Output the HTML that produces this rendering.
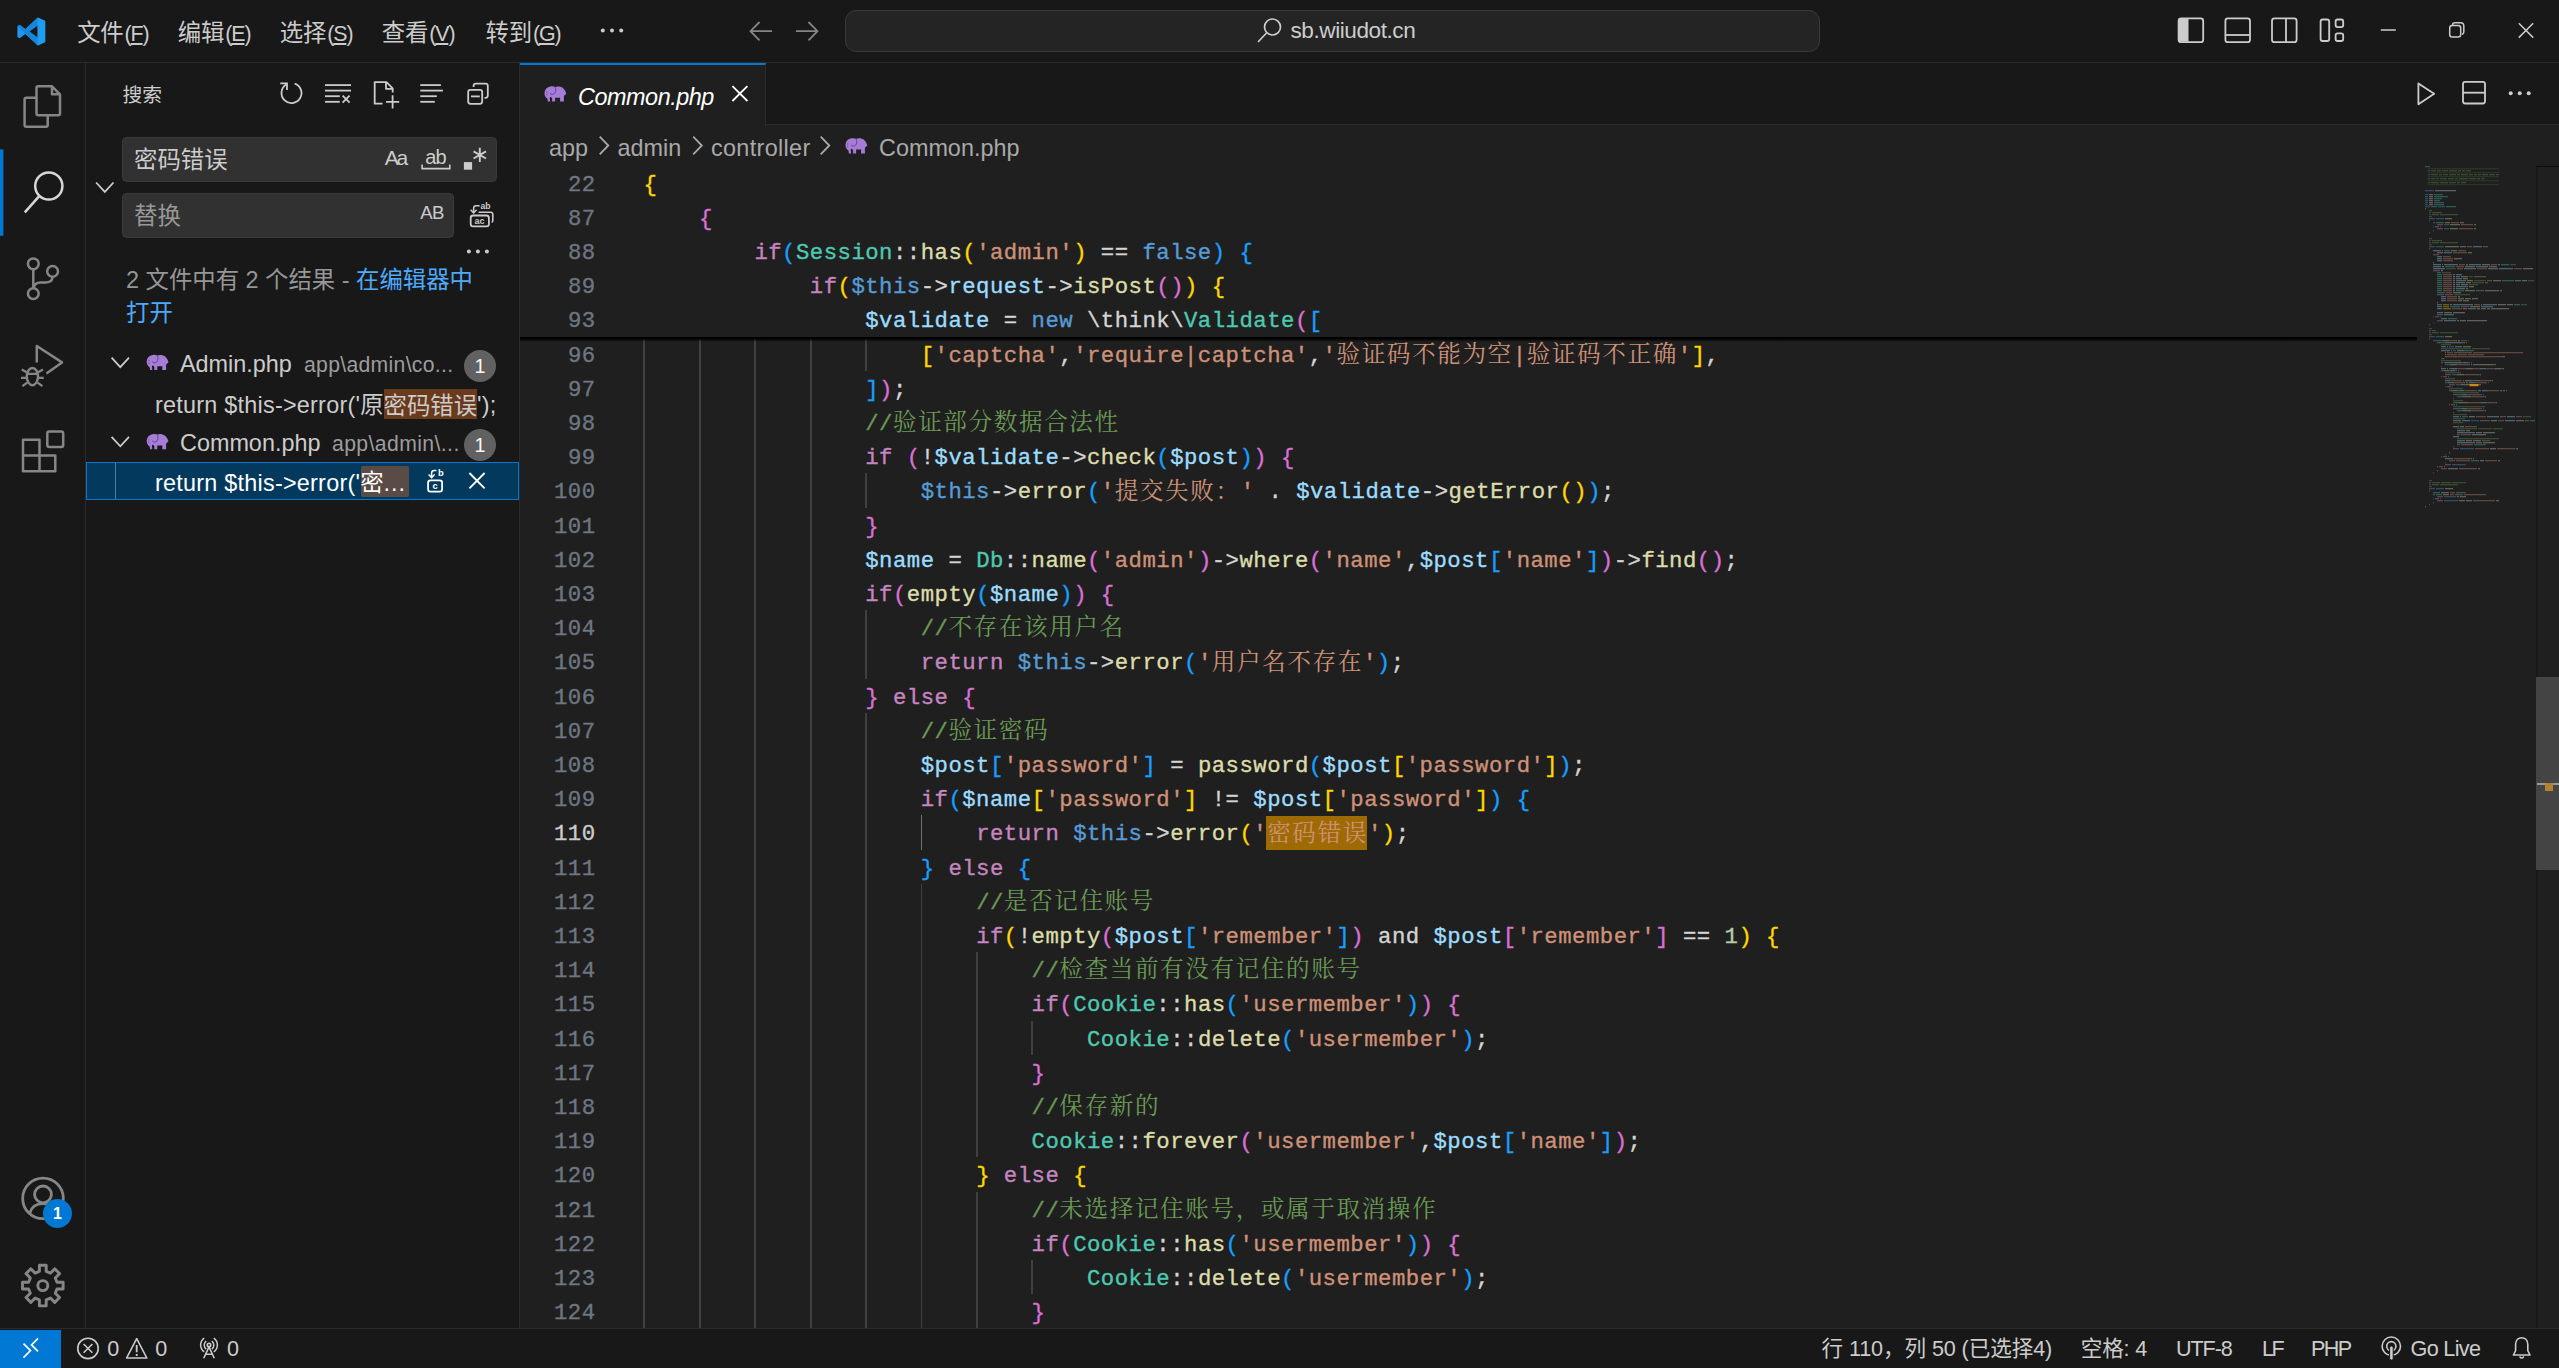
<!DOCTYPE html>
<html lang="zh-CN"><head><meta charset="utf-8"><title>Common.php - sb.wiiudot.cn - Visual Studio Code</title>
<style>
*{box-sizing:border-box;margin:0;padding:0}
html,body{width:2559px;height:1368px;overflow:hidden;background:#181818}
body{font-family:"Liberation Sans","Noto Sans CJK SC",sans-serif;color:#cccccc;-webkit-font-smoothing:antialiased}
#app{position:relative;width:2559px;height:1368px;overflow:hidden;background:#181818}
.abs{position:absolute}
.t{position:absolute;white-space:nowrap;line-height:34px;height:34px;font-size:23.4px;color:#cccccc}
.t u{text-decoration:underline;text-underline-offset:2px;text-decoration-thickness:1.5px}
i{font-style:normal}
/* regions */
#title{position:absolute;left:0;top:0;width:2559px;height:63px;background:#181818;border-bottom:1px solid #2b2b2b}
#act{position:absolute;left:0;top:63px;width:86px;height:1265.4px;background:#181818;border-right:1px solid #2b2b2b}
#side{position:absolute;left:86px;top:63px;width:434px;height:1265.4px;background:#181818;border-right:1px solid #2b2b2b}
#ed{position:absolute;left:520px;top:63px;width:2039px;height:1265.4px;background:#1f1f1f}
#tabs{position:absolute;left:520px;top:63px;width:2039px;height:62px;background:#181818;border-bottom:1px solid #2b2b2b}
#tab{position:absolute;left:520px;top:63px;width:246px;height:62.5px;background:#1f1f1f;border-right:1px solid #2b2b2b;border-top:2px solid #0078d4}
#status{position:absolute;left:0;top:1328.4px;width:2559px;height:39.6px;background:#181818;border-top:1px solid #2b2b2b}
#remote{position:absolute;left:0;top:1329.8px;width:61px;height:38.2px;background:#0078d4}
#cc{position:absolute;left:845px;top:10px;width:974.5px;height:42px;background:#242424;border:1px solid #3a3a3a;border-radius:11px}
.inp{position:absolute;background:#313131;border-radius:4.5px;border:1px solid #393939}
.badge{position:absolute;width:32px;height:32px;border-radius:16px;background:#616161;color:#f8f8f8;font-size:19.8px;line-height:32px;text-align:center}
.fm{background:#6a3a1c;display:inline-block;height:30.5px;line-height:30.5px;vertical-align:middle;position:relative;top:-2.6px}
.fm>b{font-weight:normal;position:relative;top:2.1px}
#sel{position:absolute;left:86px;top:461.8px;width:432.5px;height:38.6px;background:#04395e;border:1px solid #0078d4}
/* code */
.cl,.ln{position:absolute;white-space:pre;font-family:"Liberation Mono","Noto Serif CJK SC",monospace;font-size:22.300px;letter-spacing:0.478px;line-height:34.2px;height:34.2px}
.ln{left:520px;width:75.6px;text-align:right;color:#6e7681}
.ln.a{color:#cccccc}
.cl{color:#d4d4d4}
.cl,.ln{-webkit-text-stroke:0.35px currentColor}
.z{font-family:"Noto Serif CJK SC",serif;font-size:23.6px;letter-spacing:1.6px;font-weight:400;line-height:0;position:relative;top:0.4px;-webkit-text-stroke:0}
.k{color:#c586c0}.b{color:#569cd6}.c{color:#4ec9b0}.f{color:#dcdcaa}.v{color:#9cdcfe}
.s{color:#ce9178}.m{color:#6a9955}.n{color:#b5cea8}.w{color:#d4d4d4}
.y{color:#ffd700}.p{color:#da70d6}.u{color:#179fff}
#hl{position:absolute;left:1266.3px;top:816px;width:101px;height:33.6px;background:#9e6a03}
.g{position:absolute;width:1.8px;background:#404040}
.ga{background:#707070}
#shadow{position:absolute;left:520px;top:336.6px;width:1897px;height:5.6px;background:linear-gradient(#000000 0,#000000 25%,rgba(0,0,0,0) 100%)}
#slider{position:absolute;left:2536px;top:676.8px;width:23px;height:193.4px;background:#444444}
svg{position:absolute;left:0;top:0;overflow:visible}
</style></head>
<body><div id="app">
<div id="title"></div>
<div id="act"></div>
<div id="side"></div>
<div id="ed"></div>
<div id="tabs"></div>
<div id="tab"></div>
<div id="status"></div>
<div id="remote"></div>
<div id="cc"></div>
<div class="t " style="left:77.20px;top:15.50px;"><span style="letter-spacing:-0.3px">文件</span><span style="font-size:21.4px;letter-spacing:-1.1px;margin-left:1.2px">(<u>F</u>)</span></div>
<div class="t " style="left:177.80px;top:15.50px;"><span style="letter-spacing:-0.3px">编辑</span><span style="font-size:21.4px;letter-spacing:-1.1px;margin-left:1.2px">(<u>E</u>)</span></div>
<div class="t " style="left:279.80px;top:15.50px;"><span style="letter-spacing:-0.3px">选择</span><span style="font-size:21.4px;letter-spacing:-1.1px;margin-left:1.2px">(<u>S</u>)</span></div>
<div class="t " style="left:381.80px;top:15.50px;"><span style="letter-spacing:-0.3px">查看</span><span style="font-size:21.4px;letter-spacing:-1.1px;margin-left:1.2px">(<u>V</u>)</span></div>
<div class="t " style="left:485.60px;top:15.50px;"><span style="letter-spacing:-0.3px">转到</span><span style="font-size:21.4px;letter-spacing:-1.1px;margin-left:1.2px">(<u>G</u>)</span></div>
<div class="t " style="left:1290.50px;top:14.40px;font-size:22.6px;letter-spacing:-0.45px">sb.wiiudot.cn</div>
<div class="t " style="left:122.50px;top:78.00px;font-size:19.8px">搜索</div>
<div class="inp" style="left:122px;top:137px;width:375px;height:44.5px"></div>
<div class="inp" style="left:122px;top:193px;width:332px;height:44.5px"></div>
<div class="t " style="left:134.00px;top:143.00px;">密码错误</div>
<div class="t " style="left:134.00px;top:199.00px;color:#989898">替换</div>
<div class="t " style="left:384.80px;top:141.20px;font-size:21px;letter-spacing:-2.4px">Aa</div>
<div class="t " style="left:425.20px;top:139.50px;font-size:20px;letter-spacing:-0.8px">ab</div>
<div class="t " style="left:420.20px;top:196.40px;font-size:18.6px;letter-spacing:-0.6px">AB</div>
<div class="t " style="left:126.00px;top:263.00px;color:#969696">2 文件中有 2 个结果 - <span style="color:#4daafc">在编辑器中</span></div>
<div class="t " style="left:126.00px;top:296.00px;color:#4daafc">打开</div>
<div class="t " style="left:180.00px;top:346.80px;">Admin.php</div>
<div class="t " style="left:304.00px;top:347.80px;font-size:21.2px;color:#9d9d9d;letter-spacing:0.3px">app\admin\co...</div>
<div class="badge" style="left:464px;top:350px">1</div>
<div class="t " style="left:155.00px;top:387.80px;"><span style='letter-spacing:0.24px'>return $this-&gt;error('</span>原<span class='fm'><b>密码错误</b></span><span style='letter-spacing:0.24px'>');</span></div>
<div class="t " style="left:180.00px;top:425.70px;">Common.php</div>
<div class="t " style="left:332.00px;top:426.70px;font-size:21.2px;color:#9d9d9d;letter-spacing:0.4px">app\admin\...</div>
<div class="badge" style="left:464px;top:429px">1</div>
<div id="sel"></div>
<div class="abs" style="left:115px;top:463px;width:1px;height:36.6px;background:#4a7da6"></div>
<div class="abs" style="left:360.5px;top:466px;width:48.5px;height:31px;background:#5b4b47;border-radius:2px"></div>
<div class="t " style="left:155.00px;top:465.50px;color:#ffffff"><span style='letter-spacing:0.24px'>return $this-&gt;error('</span>密<span style='letter-spacing:1px'>...</span></div>
<div class="t " style="left:578.00px;top:80.00px;font-style:italic;color:#ffffff;font-size:23.4px;letter-spacing:-0.45px">Common.php</div>
<div class="t " style="left:549.00px;top:130.70px;color:#a9a9a9">app</div>
<div class="t " style="left:617.50px;top:130.70px;color:#a9a9a9">admin</div>
<div class="t " style="left:711.00px;top:130.70px;color:#a9a9a9;letter-spacing:0.33px">controller</div>
<div class="t " style="left:879.00px;top:130.70px;color:#a9a9a9">Common.php</div>
<div class="g" style="left:643.40px;top:336.6px;height:991.8px"></div>
<div class="g" style="left:698.84px;top:336.6px;height:991.8px"></div>
<div class="g" style="left:754.28px;top:336.6px;height:991.8px"></div>
<div class="g" style="left:809.72px;top:336.6px;height:991.8px"></div>
<div class="g" style="left:865.16px;top:336.6px;height:34.2px"></div>
<div class="g" style="left:865.16px;top:473.4px;height:34.2px"></div>
<div class="g" style="left:865.16px;top:610.2px;height:68.4px"></div>
<div class="g" style="left:865.16px;top:712.8px;height:615.6px"></div>
<div class="g ga" style="left:920.60px;top:815.4px;height:34.2px"></div>
<div class="g" style="left:920.60px;top:883.8px;height:444.6px"></div>
<div class="g" style="left:976.04px;top:952.2px;height:205.2px"></div>
<div class="g" style="left:976.04px;top:1191.6px;height:136.8px"></div>
<div class="g" style="left:1031.48px;top:1020.6px;height:34.2px"></div>
<div class="g" style="left:1031.48px;top:1260.0px;height:34.2px"></div>
<div id="hl"></div>
<div class="ln" style="top:167.5px">22</div>
<div class="cl" style="top:167.5px;left:643.50px"><span class="y">{</span></div>
<div class="ln" style="top:201.7px">87</div>
<div class="cl" style="top:201.7px;left:698.94px"><span class="p">{</span></div>
<div class="ln" style="top:235.9px">88</div>
<div class="cl" style="top:235.9px;left:754.38px"><span class="k">if</span><span class="u">(</span><span class="c">Session</span><span class="w">::</span><span class="f">has</span><span class="y">(</span><span class="s">'admin'</span><span class="y">)</span><span class="w"> == </span><span class="b">false</span><span class="u">)</span><span class="w"> </span><span class="u">{</span></div>
<div class="ln" style="top:270.1px">89</div>
<div class="cl" style="top:270.1px;left:809.82px"><span class="k">if</span><span class="y">(</span><span class="b">$this</span><span class="w">-&gt;</span><span class="v">request</span><span class="w">-&gt;</span><span class="f">isPost</span><span class="p">(</span><span class="p">)</span><span class="y">)</span><span class="w"> </span><span class="y">{</span></div>
<div class="ln" style="top:304.3px">93</div>
<div class="cl" style="top:304.3px;left:865.26px"><span class="v">$validate</span><span class="w"> = </span><span class="b">new</span><span class="w"> \think\</span><span class="c">Validate</span><span class="p">(</span><span class="u">[</span></div>
<div class="ln" style="top:338.5px">96</div>
<div class="cl" style="top:338.5px;left:920.70px"><span class="y">[</span><span class="s">'captcha'</span><span class="w">,</span><span class="s">'require|captcha'</span><span class="w">,</span><span class="s">'<i class="z">验证码不能为空</i>|<i class="z">验证码不正确</i>'</span><span class="y">]</span><span class="w">,</span></div>
<div class="ln" style="top:372.7px">97</div>
<div class="cl" style="top:372.7px;left:865.26px"><span class="u">]</span><span class="p">)</span><span class="w">;</span></div>
<div class="ln" style="top:406.9px">98</div>
<div class="cl" style="top:406.9px;left:865.26px"><span class="m">//<i class="z">验证部分数据合法性</i></span></div>
<div class="ln" style="top:441.1px">99</div>
<div class="cl" style="top:441.1px;left:865.26px"><span class="k">if</span><span class="w"> </span><span class="p">(</span><span class="w">!</span><span class="v">$validate</span><span class="w">-&gt;</span><span class="f">check</span><span class="u">(</span><span class="v">$post</span><span class="u">)</span><span class="p">)</span><span class="w"> </span><span class="p">{</span></div>
<div class="ln" style="top:475.3px">100</div>
<div class="cl" style="top:475.3px;left:920.70px"><span class="b">$this</span><span class="w">-&gt;</span><span class="f">error</span><span class="u">(</span><span class="s">'<i class="z">提交失败：</i>'</span><span class="w"> . </span><span class="v">$validate</span><span class="w">-&gt;</span><span class="f">getError</span><span class="y">(</span><span class="y">)</span><span class="u">)</span><span class="w">;</span></div>
<div class="ln" style="top:509.5px">101</div>
<div class="cl" style="top:509.5px;left:865.26px"><span class="p">}</span></div>
<div class="ln" style="top:543.7px">102</div>
<div class="cl" style="top:543.7px;left:865.26px"><span class="v">$name</span><span class="w"> = </span><span class="c">Db</span><span class="w">::</span><span class="f">name</span><span class="p">(</span><span class="s">'admin'</span><span class="p">)</span><span class="w">-&gt;</span><span class="f">where</span><span class="p">(</span><span class="s">'name'</span><span class="w">,</span><span class="v">$post</span><span class="u">[</span><span class="s">'name'</span><span class="u">]</span><span class="p">)</span><span class="w">-&gt;</span><span class="f">find</span><span class="p">(</span><span class="p">)</span><span class="w">;</span></div>
<div class="ln" style="top:577.9px">103</div>
<div class="cl" style="top:577.9px;left:865.26px"><span class="k">if</span><span class="p">(</span><span class="f">empty</span><span class="u">(</span><span class="v">$name</span><span class="u">)</span><span class="p">)</span><span class="w"> </span><span class="p">{</span></div>
<div class="ln" style="top:612.1px">104</div>
<div class="cl" style="top:612.1px;left:920.70px"><span class="m">//<i class="z">不存在该用户名</i></span></div>
<div class="ln" style="top:646.3px">105</div>
<div class="cl" style="top:646.3px;left:920.70px"><span class="k">return</span><span class="w"> </span><span class="b">$this</span><span class="w">-&gt;</span><span class="f">error</span><span class="u">(</span><span class="s">'<i class="z">用户名不存在</i>'</span><span class="u">)</span><span class="w">;</span></div>
<div class="ln" style="top:680.5px">106</div>
<div class="cl" style="top:680.5px;left:865.26px"><span class="p">}</span><span class="w"> </span><span class="k">else</span><span class="w"> </span><span class="p">{</span></div>
<div class="ln" style="top:714.7px">107</div>
<div class="cl" style="top:714.7px;left:920.70px"><span class="m">//<i class="z">验证密码</i></span></div>
<div class="ln" style="top:748.9px">108</div>
<div class="cl" style="top:748.9px;left:920.70px"><span class="v">$post</span><span class="u">[</span><span class="s">'password'</span><span class="u">]</span><span class="w"> = </span><span class="f">password</span><span class="u">(</span><span class="v">$post</span><span class="y">[</span><span class="s">'password'</span><span class="y">]</span><span class="u">)</span><span class="w">;</span></div>
<div class="ln" style="top:783.1px">109</div>
<div class="cl" style="top:783.1px;left:920.70px"><span class="k">if</span><span class="u">(</span><span class="v">$name</span><span class="y">[</span><span class="s">'password'</span><span class="y">]</span><span class="w"> != </span><span class="v">$post</span><span class="y">[</span><span class="s">'password'</span><span class="y">]</span><span class="u">)</span><span class="w"> </span><span class="u">{</span></div>
<div class="ln a" style="top:817.3px">110</div>
<div class="cl" style="top:817.3px;left:976.14px"><span class="k">return</span><span class="w"> </span><span class="b">$this</span><span class="w">-&gt;</span><span class="f">error</span><span class="y">(</span><span class="s">'</span><span class="s"><i class="z">密码错误</i></span><span class="s">'</span><span class="y">)</span><span class="w">;</span></div>
<div class="ln" style="top:851.5px">111</div>
<div class="cl" style="top:851.5px;left:920.70px"><span class="u">}</span><span class="w"> </span><span class="k">else</span><span class="w"> </span><span class="u">{</span></div>
<div class="ln" style="top:885.7px">112</div>
<div class="cl" style="top:885.7px;left:976.14px"><span class="m">//<i class="z">是否记住账号</i></span></div>
<div class="ln" style="top:919.9px">113</div>
<div class="cl" style="top:919.9px;left:976.14px"><span class="k">if</span><span class="y">(</span><span class="w">!</span><span class="f">empty</span><span class="p">(</span><span class="v">$post</span><span class="u">[</span><span class="s">'remember'</span><span class="u">]</span><span class="p">)</span><span class="w"> and </span><span class="v">$post</span><span class="p">[</span><span class="s">'remember'</span><span class="p">]</span><span class="w"> == </span><span class="n">1</span><span class="y">)</span><span class="w"> </span><span class="y">{</span></div>
<div class="ln" style="top:954.1px">114</div>
<div class="cl" style="top:954.1px;left:1031.58px"><span class="m">//<i class="z">检查当前有没有记住的账号</i></span></div>
<div class="ln" style="top:988.3px">115</div>
<div class="cl" style="top:988.3px;left:1031.58px"><span class="k">if</span><span class="p">(</span><span class="c">Cookie</span><span class="w">::</span><span class="f">has</span><span class="u">(</span><span class="s">'usermember'</span><span class="u">)</span><span class="p">)</span><span class="w"> </span><span class="p">{</span></div>
<div class="ln" style="top:1022.5px">116</div>
<div class="cl" style="top:1022.5px;left:1087.02px"><span class="c">Cookie</span><span class="w">::</span><span class="f">delete</span><span class="u">(</span><span class="s">'usermember'</span><span class="u">)</span><span class="w">;</span></div>
<div class="ln" style="top:1056.7px">117</div>
<div class="cl" style="top:1056.7px;left:1031.58px"><span class="p">}</span></div>
<div class="ln" style="top:1090.9px">118</div>
<div class="cl" style="top:1090.9px;left:1031.58px"><span class="m">//<i class="z">保存新的</i></span></div>
<div class="ln" style="top:1125.1px">119</div>
<div class="cl" style="top:1125.1px;left:1031.58px"><span class="c">Cookie</span><span class="w">::</span><span class="f">forever</span><span class="p">(</span><span class="s">'usermember'</span><span class="w">,</span><span class="v">$post</span><span class="u">[</span><span class="s">'name'</span><span class="u">]</span><span class="p">)</span><span class="w">;</span></div>
<div class="ln" style="top:1159.3px">120</div>
<div class="cl" style="top:1159.3px;left:976.14px"><span class="y">}</span><span class="w"> </span><span class="k">else</span><span class="w"> </span><span class="y">{</span></div>
<div class="ln" style="top:1193.5px">121</div>
<div class="cl" style="top:1193.5px;left:1031.58px"><span class="m">//<i class="z">未选择记住账号，或属于取消操作</i></span></div>
<div class="ln" style="top:1227.7px">122</div>
<div class="cl" style="top:1227.7px;left:1031.58px"><span class="k">if</span><span class="p">(</span><span class="c">Cookie</span><span class="w">::</span><span class="f">has</span><span class="u">(</span><span class="s">'usermember'</span><span class="u">)</span><span class="p">)</span><span class="w"> </span><span class="p">{</span></div>
<div class="ln" style="top:1261.9px">123</div>
<div class="cl" style="top:1261.9px;left:1087.02px"><span class="c">Cookie</span><span class="w">::</span><span class="f">delete</span><span class="u">(</span><span class="s">'usermember'</span><span class="u">)</span><span class="w">;</span></div>
<div class="ln" style="top:1296.1px">124</div>
<div class="cl" style="top:1296.1px;left:1031.58px"><span class="p">}</span></div>
<div id="shadow"></div>
<div class="abs" style="left:2536px;top:166px;width:2px;height:1162.4px;background:#191919"></div>
<div class="abs" style="left:2536px;top:166px;width:23px;height:1.2px;background:#0c0c0c"></div>
<div id="slider"></div>
<div class="abs" style="left:2537px;top:783.2px;width:22px;height:2px;background:#989898"></div>
<div class="abs" style="left:2545px;top:782.6px;width:8px;height:8.6px;background:#b5832f"></div>
<div class="t " style="left:107.30px;top:1331.50px;font-size:21.6px">0</div>
<div class="t " style="left:155.30px;top:1331.50px;font-size:21.6px">0</div>
<div class="t " style="left:227.10px;top:1331.50px;font-size:21.6px">0</div>
<div class="t " style="left:1821.50px;top:1332.30px;font-size:21.6px;letter-spacing:-0.1px">行 110，列 50 (已选择4)</div>
<div class="t " style="left:2080.80px;top:1332.30px;font-size:21.6px;letter-spacing:-0.2px">空格: 4</div>
<div class="t " style="left:2176.00px;top:1332.30px;font-size:21.6px;letter-spacing:-1.1px">UTF-8</div>
<div class="t " style="left:2262.00px;top:1332.30px;font-size:21.6px;letter-spacing:-2.6px">LF</div>
<div class="t " style="left:2311.00px;top:1332.30px;font-size:21.6px;letter-spacing:-1.6px">PHP</div>
<div class="t " style="left:2410.50px;top:1332.30px;font-size:21.6px;letter-spacing:-0.65px">Go Live</div>
<svg width="2559" height="1368" viewBox="0 0 2559 1368">
<rect x="2425.0" y="166.0" width="5.0" height="1.3" fill="#569cd6" opacity="0.36"/>
<rect x="2428.0" y="168.0" width="71.0" height="1.3" fill="#3f5a33" opacity="0.36"/>
<rect x="2428.0" y="170.0" width="2.0" height="1.3" fill="#6a9955" opacity="0.36"/>
<rect x="2431.0" y="170.0" width="5.0" height="1.3" fill="#6a9955" opacity="0.36"/>
<rect x="2437.0" y="170.0" width="4.0" height="1.3" fill="#6a9955" opacity="0.36"/>
<rect x="2442.0" y="170.0" width="6.0" height="1.3" fill="#6a9955" opacity="0.36"/>
<rect x="2449.0" y="170.0" width="8.0" height="1.3" fill="#6a9955" opacity="0.36"/>
<rect x="2458.0" y="170.0" width="3.0" height="1.3" fill="#6a9955" opacity="0.36"/>
<rect x="2462.0" y="170.0" width="3.0" height="1.3" fill="#6a9955" opacity="0.36"/>
<rect x="2466.0" y="170.0" width="5.0" height="1.3" fill="#6a9955" opacity="0.36"/>
<rect x="2428.0" y="172.0" width="71.0" height="1.3" fill="#3f5a33" opacity="0.36"/>
<rect x="2428.0" y="174.0" width="2.0" height="1.3" fill="#6a9955" opacity="0.36"/>
<rect x="2431.0" y="174.0" width="7.0" height="1.3" fill="#6a9955" opacity="0.36"/>
<rect x="2439.0" y="174.0" width="3.0" height="1.3" fill="#6a9955" opacity="0.36"/>
<rect x="2443.0" y="174.0" width="5.0" height="1.3" fill="#6a9955" opacity="0.36"/>
<rect x="2449.0" y="174.0" width="7.0" height="1.3" fill="#6a9955" opacity="0.36"/>
<rect x="2457.0" y="174.0" width="3.0" height="1.3" fill="#6a9955" opacity="0.36"/>
<rect x="2461.0" y="174.0" width="7.0" height="1.3" fill="#6a9955" opacity="0.36"/>
<rect x="2469.0" y="174.0" width="4.0" height="1.3" fill="#6a9955" opacity="0.36"/>
<rect x="2474.0" y="174.0" width="3.0" height="1.3" fill="#6a9955" opacity="0.36"/>
<rect x="2478.0" y="174.0" width="3.0" height="1.3" fill="#6a9955" opacity="0.36"/>
<rect x="2482.0" y="174.0" width="6.0" height="1.3" fill="#6a9955" opacity="0.36"/>
<rect x="2489.0" y="174.0" width="6.0" height="1.3" fill="#6a9955" opacity="0.36"/>
<rect x="2496.0" y="174.0" width="3.0" height="1.3" fill="#6a9955" opacity="0.36"/>
<rect x="2428.0" y="176.0" width="71.0" height="1.3" fill="#3f5a33" opacity="0.36"/>
<rect x="2428.0" y="178.0" width="2.0" height="1.3" fill="#6a9955" opacity="0.36"/>
<rect x="2431.0" y="178.0" width="4.0" height="1.3" fill="#6a9955" opacity="0.36"/>
<rect x="2436.0" y="178.0" width="3.0" height="1.3" fill="#6a9955" opacity="0.36"/>
<rect x="2440.0" y="178.0" width="7.0" height="1.3" fill="#6a9955" opacity="0.36"/>
<rect x="2448.0" y="178.0" width="6.0" height="1.3" fill="#6a9955" opacity="0.36"/>
<rect x="2455.0" y="178.0" width="3.0" height="1.3" fill="#6a9955" opacity="0.36"/>
<rect x="2459.0" y="178.0" width="9.0" height="1.3" fill="#6a9955" opacity="0.36"/>
<rect x="2469.0" y="178.0" width="7.0" height="1.3" fill="#6a9955" opacity="0.36"/>
<rect x="2477.0" y="178.0" width="3.0" height="1.3" fill="#6a9955" opacity="0.36"/>
<rect x="2481.0" y="178.0" width="4.0" height="1.3" fill="#6a9955" opacity="0.36"/>
<rect x="2428.0" y="180.0" width="71.0" height="1.3" fill="#3f5a33" opacity="0.36"/>
<rect x="2428.0" y="182.0" width="2.0" height="1.3" fill="#6a9955" opacity="0.36"/>
<rect x="2431.0" y="182.0" width="8.0" height="1.3" fill="#6a9955" opacity="0.36"/>
<rect x="2440.0" y="182.0" width="8.0" height="1.3" fill="#6a9955" opacity="0.36"/>
<rect x="2449.0" y="182.0" width="7.0" height="1.3" fill="#6a9955" opacity="0.36"/>
<rect x="2457.0" y="182.0" width="3.0" height="1.3" fill="#6a9955" opacity="0.36"/>
<rect x="2461.0" y="182.0" width="5.0" height="1.3" fill="#6a9955" opacity="0.36"/>
<rect x="2428.0" y="184.0" width="71.0" height="1.3" fill="#3f5a33" opacity="0.36"/>
<rect x="2425.0" y="190.0" width="9.0" height="1.3" fill="#569cd6" opacity="0.36"/>
<rect x="2435.0" y="190.0" width="21.0" height="1.3" fill="#d4d4d4" opacity="0.36"/>
<rect x="2425.0" y="194.0" width="3.0" height="1.3" fill="#569cd6" opacity="0.36"/>
<rect x="2429.0" y="194.0" width="4.0" height="1.3" fill="#d4d4d4" opacity="0.36"/>
<rect x="2434.0" y="194.0" width="9.0" height="1.3" fill="#4ec9b0" opacity="0.36"/>
<rect x="2425.0" y="196.0" width="3.0" height="1.3" fill="#569cd6" opacity="0.36"/>
<rect x="2429.0" y="196.0" width="4.0" height="1.3" fill="#d4d4d4" opacity="0.36"/>
<rect x="2434.0" y="196.0" width="14.0" height="1.3" fill="#4ec9b0" opacity="0.36"/>
<rect x="2425.0" y="198.0" width="3.0" height="1.3" fill="#569cd6" opacity="0.36"/>
<rect x="2429.0" y="198.0" width="4.0" height="1.3" fill="#d4d4d4" opacity="0.36"/>
<rect x="2434.0" y="198.0" width="8.0" height="1.3" fill="#4ec9b0" opacity="0.36"/>
<rect x="2425.0" y="200.0" width="3.0" height="1.3" fill="#569cd6" opacity="0.36"/>
<rect x="2429.0" y="200.0" width="4.0" height="1.3" fill="#d4d4d4" opacity="0.36"/>
<rect x="2434.0" y="200.0" width="6.0" height="1.3" fill="#4ec9b0" opacity="0.36"/>
<rect x="2425.0" y="202.0" width="3.0" height="1.3" fill="#569cd6" opacity="0.36"/>
<rect x="2429.0" y="202.0" width="4.0" height="1.3" fill="#d4d4d4" opacity="0.36"/>
<rect x="2434.0" y="202.0" width="10.0" height="1.3" fill="#4ec9b0" opacity="0.36"/>
<rect x="2425.0" y="204.0" width="3.0" height="1.3" fill="#569cd6" opacity="0.36"/>
<rect x="2429.0" y="204.0" width="4.0" height="1.3" fill="#d4d4d4" opacity="0.36"/>
<rect x="2434.0" y="204.0" width="10.0" height="1.3" fill="#4ec9b0" opacity="0.36"/>
<rect x="2425.0" y="206.0" width="5.0" height="1.3" fill="#569cd6" opacity="0.36"/>
<rect x="2431.0" y="206.0" width="6.0" height="1.3" fill="#4ec9b0" opacity="0.36"/>
<rect x="2438.0" y="206.0" width="7.0" height="1.3" fill="#569cd6" opacity="0.36"/>
<rect x="2446.0" y="206.0" width="10.0" height="1.3" fill="#4ec9b0" opacity="0.36"/>
<rect x="2425.0" y="208.0" width="1.0" height="1.3" fill="#ffd700" opacity="0.36"/>
<rect x="2429.0" y="210.0" width="3.0" height="1.3" fill="#6a9955" opacity="0.36"/>
<rect x="2429.0" y="212.0" width="2.0" height="1.3" fill="#6a9955" opacity="0.36"/>
<rect x="2432.0" y="212.0" width="10.0" height="1.3" fill="#6a9955" opacity="0.36"/>
<rect x="2429.0" y="214.0" width="2.0" height="1.3" fill="#6a9955" opacity="0.36"/>
<rect x="2432.0" y="214.0" width="7.0" height="1.3" fill="#6a9955" opacity="0.36"/>
<rect x="2440.0" y="214.0" width="18.0" height="1.3" fill="#6a9955" opacity="0.36"/>
<rect x="2429.0" y="216.0" width="3.0" height="1.3" fill="#6a9955" opacity="0.36"/>
<rect x="2429.0" y="218.0" width="6.0" height="1.3" fill="#569cd6" opacity="0.36"/>
<rect x="2436.0" y="218.0" width="8.0" height="1.3" fill="#569cd6" opacity="0.36"/>
<rect x="2445.0" y="218.0" width="7.0" height="1.3" fill="#dcdcaa" opacity="0.36"/>
<rect x="2429.0" y="220.0" width="1.0" height="1.3" fill="#da70d6" opacity="0.36"/>
<rect x="2433.0" y="222.0" width="2.0" height="1.3" fill="#c586c0" opacity="0.36"/>
<rect x="2436.0" y="222.0" width="8.0" height="1.3" fill="#4ec9b0" opacity="0.36"/>
<rect x="2445.0" y="222.0" width="5.0" height="1.3" fill="#dcdcaa" opacity="0.36"/>
<rect x="2451.0" y="222.0" width="8.0" height="1.3" fill="#ce9178" opacity="0.36"/>
<rect x="2460.0" y="222.0" width="4.0" height="1.3" fill="#d4d4d4" opacity="0.36"/>
<rect x="2437.0" y="224.0" width="6.0" height="1.3" fill="#c586c0" opacity="0.36"/>
<rect x="2444.0" y="224.0" width="5.0" height="1.3" fill="#569cd6" opacity="0.36"/>
<rect x="2450.0" y="224.0" width="10.0" height="1.3" fill="#dcdcaa" opacity="0.36"/>
<rect x="2461.0" y="224.0" width="12.0" height="1.3" fill="#ce9178" opacity="0.36"/>
<rect x="2474.0" y="224.0" width="2.0" height="1.3" fill="#d4d4d4" opacity="0.36"/>
<rect x="2433.0" y="226.0" width="1.0" height="1.3" fill="#179fff" opacity="0.36"/>
<rect x="2435.0" y="226.0" width="4.0" height="1.3" fill="#c586c0" opacity="0.36"/>
<rect x="2440.0" y="226.0" width="1.0" height="1.3" fill="#179fff" opacity="0.36"/>
<rect x="2437.0" y="228.0" width="6.0" height="1.3" fill="#c586c0" opacity="0.36"/>
<rect x="2444.0" y="228.0" width="5.0" height="1.3" fill="#569cd6" opacity="0.36"/>
<rect x="2450.0" y="228.0" width="8.0" height="1.3" fill="#dcdcaa" opacity="0.36"/>
<rect x="2459.0" y="228.0" width="14.0" height="1.3" fill="#ce9178" opacity="0.36"/>
<rect x="2474.0" y="228.0" width="2.0" height="1.3" fill="#d4d4d4" opacity="0.36"/>
<rect x="2433.0" y="230.0" width="1.0" height="1.3" fill="#179fff" opacity="0.36"/>
<rect x="2429.0" y="232.0" width="1.0" height="1.3" fill="#da70d6" opacity="0.36"/>
<rect x="2429.0" y="238.0" width="3.0" height="1.3" fill="#6a9955" opacity="0.36"/>
<rect x="2429.0" y="240.0" width="2.0" height="1.3" fill="#6a9955" opacity="0.36"/>
<rect x="2432.0" y="240.0" width="10.0" height="1.3" fill="#6a9955" opacity="0.36"/>
<rect x="2429.0" y="242.0" width="2.0" height="1.3" fill="#6a9955" opacity="0.36"/>
<rect x="2432.0" y="242.0" width="7.0" height="1.3" fill="#6a9955" opacity="0.36"/>
<rect x="2440.0" y="242.0" width="18.0" height="1.3" fill="#6a9955" opacity="0.36"/>
<rect x="2429.0" y="244.0" width="3.0" height="1.3" fill="#6a9955" opacity="0.36"/>
<rect x="2429.0" y="246.0" width="6.0" height="1.3" fill="#569cd6" opacity="0.36"/>
<rect x="2436.0" y="246.0" width="8.0" height="1.3" fill="#569cd6" opacity="0.36"/>
<rect x="2445.0" y="246.0" width="14.0" height="1.3" fill="#dcdcaa" opacity="0.36"/>
<rect x="2460.0" y="246.0" width="6.0" height="1.3" fill="#9cdcfe" opacity="0.36"/>
<rect x="2467.0" y="246.0" width="5.0" height="1.3" fill="#ce9178" opacity="0.36"/>
<rect x="2473.0" y="246.0" width="9.0" height="1.3" fill="#9cdcfe" opacity="0.36"/>
<rect x="2483.0" y="246.0" width="5.0" height="1.3" fill="#ce9178" opacity="0.36"/>
<rect x="2429.0" y="248.0" width="1.0" height="1.3" fill="#da70d6" opacity="0.36"/>
<rect x="2433.0" y="250.0" width="8.0" height="1.3" fill="#9cdcfe" opacity="0.36"/>
<rect x="2442.0" y="250.0" width="1.0" height="1.3" fill="#d4d4d4" opacity="0.36"/>
<rect x="2444.0" y="250.0" width="6.0" height="1.3" fill="#4ec9b0" opacity="0.36"/>
<rect x="2451.0" y="250.0" width="6.0" height="1.3" fill="#dcdcaa" opacity="0.36"/>
<rect x="2458.0" y="250.0" width="8.0" height="1.3" fill="#ce9178" opacity="0.36"/>
<rect x="2437.0" y="252.0" width="6.0" height="1.3" fill="#dcdcaa" opacity="0.36"/>
<rect x="2444.0" y="252.0" width="8.0" height="1.3" fill="#9cdcfe" opacity="0.36"/>
<rect x="2453.0" y="252.0" width="14.0" height="1.3" fill="#ce9178" opacity="0.36"/>
<rect x="2468.0" y="252.0" width="4.0" height="1.3" fill="#d4d4d4" opacity="0.36"/>
<rect x="2433.0" y="254.0" width="6.0" height="1.3" fill="#c586c0" opacity="0.36"/>
<rect x="2437.0" y="256.0" width="5.0" height="1.3" fill="#9cdcfe" opacity="0.36"/>
<rect x="2443.0" y="256.0" width="8.0" height="1.3" fill="#ce9178" opacity="0.36"/>
<rect x="2437.0" y="258.0" width="5.0" height="1.3" fill="#9cdcfe" opacity="0.36"/>
<rect x="2443.0" y="258.0" width="10.0" height="1.3" fill="#ce9178" opacity="0.36"/>
<rect x="2454.0" y="258.0" width="8.0" height="1.3" fill="#dcdcaa" opacity="0.36"/>
<rect x="2437.0" y="260.0" width="5.0" height="1.3" fill="#9cdcfe" opacity="0.36"/>
<rect x="2443.0" y="260.0" width="10.0" height="1.3" fill="#ce9178" opacity="0.36"/>
<rect x="2433.0" y="262.0" width="1.0" height="1.3" fill="#d4d4d4" opacity="0.36"/>
<rect x="2433.0" y="264.0" width="8.0" height="1.3" fill="#9cdcfe" opacity="0.36"/>
<rect x="2442.0" y="264.0" width="1.0" height="1.3" fill="#d4d4d4" opacity="0.36"/>
<rect x="2444.0" y="264.0" width="14.0" height="1.3" fill="#9cdcfe" opacity="0.36"/>
<rect x="2459.0" y="264.0" width="6.0" height="1.3" fill="#ce9178" opacity="0.36"/>
<rect x="2466.0" y="264.0" width="2.0" height="1.3" fill="#d4d4d4" opacity="0.36"/>
<rect x="2469.0" y="264.0" width="12.0" height="1.3" fill="#9cdcfe" opacity="0.36"/>
<rect x="2482.0" y="264.0" width="8.0" height="1.3" fill="#dcdcaa" opacity="0.36"/>
<rect x="2491.0" y="264.0" width="6.0" height="1.3" fill="#ce9178" opacity="0.36"/>
<rect x="2498.0" y="264.0" width="2.0" height="1.3" fill="#d4d4d4" opacity="0.36"/>
<rect x="2501.0" y="264.0" width="8.0" height="1.3" fill="#4ec9b0" opacity="0.36"/>
<rect x="2510.0" y="264.0" width="6.0" height="1.3" fill="#6a9955" opacity="0.36"/>
<rect x="2433.0" y="266.0" width="8.0" height="1.3" fill="#9cdcfe" opacity="0.36"/>
<rect x="2442.0" y="266.0" width="2.0" height="1.3" fill="#d4d4d4" opacity="0.36"/>
<rect x="2445.0" y="266.0" width="10.0" height="1.3" fill="#4ec9b0" opacity="0.36"/>
<rect x="2456.0" y="266.0" width="8.0" height="1.3" fill="#ce9178" opacity="0.36"/>
<rect x="2465.0" y="266.0" width="10.0" height="1.3" fill="#dcdcaa" opacity="0.36"/>
<rect x="2476.0" y="266.0" width="12.0" height="1.3" fill="#9cdcfe" opacity="0.36"/>
<rect x="2489.0" y="266.0" width="8.0" height="1.3" fill="#d4d4d4" opacity="0.36"/>
<rect x="2433.0" y="268.0" width="12.0" height="1.3" fill="#9cdcfe" opacity="0.36"/>
<rect x="2446.0" y="268.0" width="10.0" height="1.3" fill="#6a9955" opacity="0.36"/>
<rect x="2457.0" y="268.0" width="6.0" height="1.3" fill="#ce9178" opacity="0.36"/>
<rect x="2464.0" y="268.0" width="12.0" height="1.3" fill="#9cdcfe" opacity="0.36"/>
<rect x="2477.0" y="268.0" width="10.0" height="1.3" fill="#ce9178" opacity="0.36"/>
<rect x="2488.0" y="268.0" width="10.0" height="1.3" fill="#d4d4d4" opacity="0.36"/>
<rect x="2499.0" y="268.0" width="14.0" height="1.3" fill="#9cdcfe" opacity="0.36"/>
<rect x="2514.0" y="268.0" width="8.0" height="1.3" fill="#ce9178" opacity="0.36"/>
<rect x="2523.0" y="268.0" width="10.0" height="1.3" fill="#d4d4d4" opacity="0.36"/>
<rect x="2433.0" y="270.0" width="7.0" height="1.3" fill="#c586c0" opacity="0.36"/>
<rect x="2441.0" y="270.0" width="2.0" height="1.3" fill="#d4d4d4" opacity="0.36"/>
<rect x="2437.0" y="272.0" width="4.0" height="1.3" fill="#4ec9b0" opacity="0.36"/>
<rect x="2442.0" y="272.0" width="9.0" height="1.3" fill="#6a9955" opacity="0.36"/>
<rect x="2437.0" y="274.0" width="5.0" height="1.3" fill="#4ec9b0" opacity="0.36"/>
<rect x="2443.0" y="274.0" width="9.0" height="1.3" fill="#ce9178" opacity="0.36"/>
<rect x="2453.0" y="274.0" width="2.0" height="1.3" fill="#d4d4d4" opacity="0.36"/>
<rect x="2456.0" y="274.0" width="6.0" height="1.3" fill="#9cdcfe" opacity="0.36"/>
<rect x="2437.0" y="276.0" width="5.0" height="1.3" fill="#4ec9b0" opacity="0.36"/>
<rect x="2443.0" y="276.0" width="9.0" height="1.3" fill="#ce9178" opacity="0.36"/>
<rect x="2453.0" y="276.0" width="2.0" height="1.3" fill="#d4d4d4" opacity="0.36"/>
<rect x="2456.0" y="276.0" width="4.0" height="1.3" fill="#9cdcfe" opacity="0.36"/>
<rect x="2461.0" y="276.0" width="7.0" height="1.3" fill="#dcdcaa" opacity="0.36"/>
<rect x="2469.0" y="276.0" width="4.0" height="1.3" fill="#6a9955" opacity="0.36"/>
<rect x="2474.0" y="276.0" width="12.0" height="1.3" fill="#ce9178" opacity="0.36"/>
<rect x="2437.0" y="278.0" width="5.0" height="1.3" fill="#4ec9b0" opacity="0.36"/>
<rect x="2443.0" y="278.0" width="9.0" height="1.3" fill="#ce9178" opacity="0.36"/>
<rect x="2453.0" y="278.0" width="2.0" height="1.3" fill="#d4d4d4" opacity="0.36"/>
<rect x="2456.0" y="278.0" width="6.0" height="1.3" fill="#9cdcfe" opacity="0.36"/>
<rect x="2463.0" y="278.0" width="5.0" height="1.3" fill="#dcdcaa" opacity="0.36"/>
<rect x="2437.0" y="280.0" width="5.0" height="1.3" fill="#4ec9b0" opacity="0.36"/>
<rect x="2443.0" y="280.0" width="9.0" height="1.3" fill="#ce9178" opacity="0.36"/>
<rect x="2453.0" y="280.0" width="2.0" height="1.3" fill="#d4d4d4" opacity="0.36"/>
<rect x="2456.0" y="280.0" width="10.0" height="1.3" fill="#9cdcfe" opacity="0.36"/>
<rect x="2467.0" y="280.0" width="6.0" height="1.3" fill="#dcdcaa" opacity="0.36"/>
<rect x="2474.0" y="280.0" width="12.0" height="1.3" fill="#6a9955" opacity="0.36"/>
<rect x="2487.0" y="280.0" width="5.0" height="1.3" fill="#ce9178" opacity="0.36"/>
<rect x="2493.0" y="280.0" width="8.0" height="1.3" fill="#d4d4d4" opacity="0.36"/>
<rect x="2502.0" y="280.0" width="12.0" height="1.3" fill="#4ec9b0" opacity="0.36"/>
<rect x="2515.0" y="280.0" width="6.0" height="1.3" fill="#9cdcfe" opacity="0.36"/>
<rect x="2522.0" y="280.0" width="5.0" height="1.3" fill="#dcdcaa" opacity="0.36"/>
<rect x="2528.0" y="280.0" width="6.0" height="1.3" fill="#6a9955" opacity="0.36"/>
<rect x="2437.0" y="282.0" width="5.0" height="1.3" fill="#4ec9b0" opacity="0.36"/>
<rect x="2443.0" y="282.0" width="9.0" height="1.3" fill="#ce9178" opacity="0.36"/>
<rect x="2453.0" y="282.0" width="2.0" height="1.3" fill="#d4d4d4" opacity="0.36"/>
<rect x="2456.0" y="282.0" width="9.0" height="1.3" fill="#9cdcfe" opacity="0.36"/>
<rect x="2466.0" y="282.0" width="5.0" height="1.3" fill="#dcdcaa" opacity="0.36"/>
<rect x="2472.0" y="282.0" width="12.0" height="1.3" fill="#6a9955" opacity="0.36"/>
<rect x="2485.0" y="282.0" width="3.0" height="1.3" fill="#ce9178" opacity="0.36"/>
<rect x="2437.0" y="284.0" width="5.0" height="1.3" fill="#4ec9b0" opacity="0.36"/>
<rect x="2443.0" y="284.0" width="9.0" height="1.3" fill="#ce9178" opacity="0.36"/>
<rect x="2453.0" y="284.0" width="2.0" height="1.3" fill="#d4d4d4" opacity="0.36"/>
<rect x="2456.0" y="284.0" width="4.0" height="1.3" fill="#9cdcfe" opacity="0.36"/>
<rect x="2461.0" y="284.0" width="7.0" height="1.3" fill="#dcdcaa" opacity="0.36"/>
<rect x="2469.0" y="284.0" width="9.0" height="1.3" fill="#6a9955" opacity="0.36"/>
<rect x="2437.0" y="286.0" width="5.0" height="1.3" fill="#4ec9b0" opacity="0.36"/>
<rect x="2443.0" y="286.0" width="9.0" height="1.3" fill="#ce9178" opacity="0.36"/>
<rect x="2453.0" y="286.0" width="2.0" height="1.3" fill="#d4d4d4" opacity="0.36"/>
<rect x="2456.0" y="286.0" width="12.0" height="1.3" fill="#9cdcfe" opacity="0.36"/>
<rect x="2469.0" y="286.0" width="5.0" height="1.3" fill="#dcdcaa" opacity="0.36"/>
<rect x="2437.0" y="288.0" width="5.0" height="1.3" fill="#4ec9b0" opacity="0.36"/>
<rect x="2443.0" y="288.0" width="9.0" height="1.3" fill="#ce9178" opacity="0.36"/>
<rect x="2453.0" y="288.0" width="2.0" height="1.3" fill="#d4d4d4" opacity="0.36"/>
<rect x="2456.0" y="288.0" width="9.0" height="1.3" fill="#9cdcfe" opacity="0.36"/>
<rect x="2466.0" y="288.0" width="2.0" height="1.3" fill="#dcdcaa" opacity="0.36"/>
<rect x="2437.0" y="290.0" width="5.0" height="1.3" fill="#4ec9b0" opacity="0.36"/>
<rect x="2443.0" y="290.0" width="9.0" height="1.3" fill="#ce9178" opacity="0.36"/>
<rect x="2453.0" y="290.0" width="2.0" height="1.3" fill="#d4d4d4" opacity="0.36"/>
<rect x="2456.0" y="290.0" width="8.0" height="1.3" fill="#4ec9b0" opacity="0.36"/>
<rect x="2465.0" y="290.0" width="10.0" height="1.3" fill="#d4d4d4" opacity="0.36"/>
<rect x="2476.0" y="290.0" width="8.0" height="1.3" fill="#4ec9b0" opacity="0.36"/>
<rect x="2485.0" y="290.0" width="14.0" height="1.3" fill="#d4d4d4" opacity="0.36"/>
<rect x="2500.0" y="290.0" width="2.0" height="1.3" fill="#d4d4d4" opacity="0.36"/>
<rect x="2437.0" y="292.0" width="8.0" height="1.3" fill="#4ec9b0" opacity="0.36"/>
<rect x="2446.0" y="292.0" width="6.0" height="1.3" fill="#ce9178" opacity="0.36"/>
<rect x="2453.0" y="292.0" width="8.0" height="1.3" fill="#d4d4d4" opacity="0.36"/>
<rect x="2437.0" y="294.0" width="7.0" height="1.3" fill="#c586c0" opacity="0.36"/>
<rect x="2445.0" y="294.0" width="8.0" height="1.3" fill="#ce9178" opacity="0.36"/>
<rect x="2454.0" y="294.0" width="16.0" height="1.3" fill="#6a9955" opacity="0.36"/>
<rect x="2441.0" y="296.0" width="5.0" height="1.3" fill="#9cdcfe" opacity="0.36"/>
<rect x="2447.0" y="296.0" width="10.0" height="1.3" fill="#ce9178" opacity="0.36"/>
<rect x="2458.0" y="296.0" width="2.0" height="1.3" fill="#d4d4d4" opacity="0.36"/>
<rect x="2441.0" y="298.0" width="5.0" height="1.3" fill="#9cdcfe" opacity="0.36"/>
<rect x="2447.0" y="298.0" width="10.0" height="1.3" fill="#ce9178" opacity="0.36"/>
<rect x="2458.0" y="298.0" width="6.0" height="1.3" fill="#d4d4d4" opacity="0.36"/>
<rect x="2465.0" y="298.0" width="6.0" height="1.3" fill="#dcdcaa" opacity="0.36"/>
<rect x="2472.0" y="298.0" width="6.0" height="1.3" fill="#d4d4d4" opacity="0.36"/>
<rect x="2441.0" y="300.0" width="5.0" height="1.3" fill="#9cdcfe" opacity="0.36"/>
<rect x="2447.0" y="300.0" width="10.0" height="1.3" fill="#ce9178" opacity="0.36"/>
<rect x="2458.0" y="300.0" width="4.0" height="1.3" fill="#d4d4d4" opacity="0.36"/>
<rect x="2463.0" y="300.0" width="6.0" height="1.3" fill="#dcdcaa" opacity="0.36"/>
<rect x="2437.0" y="302.0" width="1.0" height="1.3" fill="#d4d4d4" opacity="0.36"/>
<rect x="2437.0" y="304.0" width="5.0" height="1.3" fill="#9cdcfe" opacity="0.36"/>
<rect x="2443.0" y="304.0" width="6.0" height="1.3" fill="#ffd700" opacity="0.36"/>
<rect x="2450.0" y="304.0" width="2.0" height="1.3" fill="#d4d4d4" opacity="0.36"/>
<rect x="2453.0" y="304.0" width="20.0" height="1.3" fill="#9cdcfe" opacity="0.36"/>
<rect x="2474.0" y="304.0" width="6.0" height="1.3" fill="#ce9178" opacity="0.36"/>
<rect x="2481.0" y="304.0" width="1.0" height="1.3" fill="#d4d4d4" opacity="0.36"/>
<rect x="2483.0" y="304.0" width="14.0" height="1.3" fill="#9cdcfe" opacity="0.36"/>
<rect x="2498.0" y="304.0" width="8.0" height="1.3" fill="#dcdcaa" opacity="0.36"/>
<rect x="2507.0" y="304.0" width="6.0" height="1.3" fill="#d4d4d4" opacity="0.36"/>
<rect x="2514.0" y="304.0" width="6.0" height="1.3" fill="#4ec9b0" opacity="0.36"/>
<rect x="2521.0" y="304.0" width="6.0" height="1.3" fill="#6a9955" opacity="0.36"/>
<rect x="2437.0" y="306.0" width="5.0" height="1.3" fill="#9cdcfe" opacity="0.36"/>
<rect x="2443.0" y="306.0" width="6.0" height="1.3" fill="#ffd700" opacity="0.36"/>
<rect x="2450.0" y="306.0" width="10.0" height="1.3" fill="#4ec9b0" opacity="0.36"/>
<rect x="2461.0" y="306.0" width="8.0" height="1.3" fill="#ce9178" opacity="0.36"/>
<rect x="2470.0" y="306.0" width="10.0" height="1.3" fill="#dcdcaa" opacity="0.36"/>
<rect x="2481.0" y="306.0" width="12.0" height="1.3" fill="#9cdcfe" opacity="0.36"/>
<rect x="2437.0" y="308.0" width="5.0" height="1.3" fill="#9cdcfe" opacity="0.36"/>
<rect x="2443.0" y="308.0" width="8.0" height="1.3" fill="#ffd700" opacity="0.36"/>
<rect x="2452.0" y="308.0" width="10.0" height="1.3" fill="#ce9178" opacity="0.36"/>
<rect x="2463.0" y="308.0" width="4.0" height="1.3" fill="#d4d4d4" opacity="0.36"/>
<rect x="2468.0" y="308.0" width="8.0" height="1.3" fill="#9cdcfe" opacity="0.36"/>
<rect x="2477.0" y="308.0" width="3.0" height="1.3" fill="#d4d4d4" opacity="0.36"/>
<rect x="2481.0" y="308.0" width="5.0" height="1.3" fill="#d4d4d4" opacity="0.36"/>
<rect x="2487.0" y="308.0" width="3.0" height="1.3" fill="#d4d4d4" opacity="0.36"/>
<rect x="2491.0" y="308.0" width="18.0" height="1.3" fill="#d4d4d4" opacity="0.36"/>
<rect x="2437.0" y="312.0" width="6.0" height="1.3" fill="#9cdcfe" opacity="0.36"/>
<rect x="2444.0" y="312.0" width="8.0" height="1.3" fill="#d4d4d4" opacity="0.36"/>
<rect x="2453.0" y="312.0" width="12.0" height="1.3" fill="#d4d4d4" opacity="0.36"/>
<rect x="2437.0" y="314.0" width="6.0" height="1.3" fill="#c586c0" opacity="0.36"/>
<rect x="2444.0" y="314.0" width="10.0" height="1.3" fill="#9cdcfe" opacity="0.36"/>
<rect x="2433.0" y="316.0" width="1.0" height="1.3" fill="#179fff" opacity="0.36"/>
<rect x="2435.0" y="316.0" width="4.0" height="1.3" fill="#c586c0" opacity="0.36"/>
<rect x="2440.0" y="316.0" width="1.0" height="1.3" fill="#179fff" opacity="0.36"/>
<rect x="2441.0" y="318.0" width="6.0" height="1.3" fill="#9cdcfe" opacity="0.36"/>
<rect x="2448.0" y="318.0" width="9.0" height="1.3" fill="#4ec9b0" opacity="0.36"/>
<rect x="2437.0" y="320.0" width="6.0" height="1.3" fill="#c586c0" opacity="0.36"/>
<rect x="2444.0" y="320.0" width="12.0" height="1.3" fill="#9cdcfe" opacity="0.36"/>
<rect x="2457.0" y="320.0" width="2.0" height="1.3" fill="#d4d4d4" opacity="0.36"/>
<rect x="2460.0" y="320.0" width="6.0" height="1.3" fill="#d4d4d4" opacity="0.36"/>
<rect x="2467.0" y="320.0" width="20.0" height="1.3" fill="#d4d4d4" opacity="0.36"/>
<rect x="2433.0" y="322.0" width="1.0" height="1.3" fill="#179fff" opacity="0.36"/>
<rect x="2429.0" y="324.0" width="1.0" height="1.3" fill="#da70d6" opacity="0.36"/>
<rect x="2429.0" y="328.0" width="3.0" height="1.3" fill="#6a9955" opacity="0.36"/>
<rect x="2429.0" y="330.0" width="2.0" height="1.3" fill="#6a9955" opacity="0.36"/>
<rect x="2432.0" y="330.0" width="4.0" height="1.3" fill="#6a9955" opacity="0.36"/>
<rect x="2429.0" y="332.0" width="2.0" height="1.3" fill="#6a9955" opacity="0.36"/>
<rect x="2432.0" y="332.0" width="7.0" height="1.3" fill="#6a9955" opacity="0.36"/>
<rect x="2440.0" y="332.0" width="18.0" height="1.3" fill="#6a9955" opacity="0.36"/>
<rect x="2429.0" y="334.0" width="3.0" height="1.3" fill="#6a9955" opacity="0.36"/>
<rect x="2429.0" y="336.0" width="6.0" height="1.3" fill="#569cd6" opacity="0.36"/>
<rect x="2436.0" y="336.0" width="8.0" height="1.3" fill="#569cd6" opacity="0.36"/>
<rect x="2445.0" y="336.0" width="7.0" height="1.3" fill="#dcdcaa" opacity="0.36"/>
<rect x="2429.0" y="338.0" width="1.0" height="1.3" fill="#da70d6" opacity="0.36"/>
<rect x="2433.0" y="340.0" width="2.0" height="1.3" fill="#c586c0" opacity="0.36"/>
<rect x="2435.0" y="340.0" width="1.0" height="1.3" fill="#179fff" opacity="0.36"/>
<rect x="2436.0" y="340.0" width="7.0" height="1.3" fill="#4ec9b0" opacity="0.36"/>
<rect x="2443.0" y="340.0" width="2.0" height="1.3" fill="#d4d4d4" opacity="0.36"/>
<rect x="2445.0" y="340.0" width="3.0" height="1.3" fill="#dcdcaa" opacity="0.36"/>
<rect x="2448.0" y="340.0" width="1.0" height="1.3" fill="#ffd700" opacity="0.36"/>
<rect x="2449.0" y="340.0" width="7.0" height="1.3" fill="#ce9178" opacity="0.36"/>
<rect x="2456.0" y="340.0" width="1.0" height="1.3" fill="#ffd700" opacity="0.36"/>
<rect x="2458.0" y="340.0" width="2.0" height="1.3" fill="#d4d4d4" opacity="0.36"/>
<rect x="2461.0" y="340.0" width="5.0" height="1.3" fill="#569cd6" opacity="0.36"/>
<rect x="2466.0" y="340.0" width="1.0" height="1.3" fill="#179fff" opacity="0.36"/>
<rect x="2468.0" y="340.0" width="1.0" height="1.3" fill="#179fff" opacity="0.36"/>
<rect x="2437.0" y="342.0" width="2.0" height="1.3" fill="#c586c0" opacity="0.36"/>
<rect x="2439.0" y="342.0" width="1.0" height="1.3" fill="#ffd700" opacity="0.36"/>
<rect x="2440.0" y="342.0" width="5.0" height="1.3" fill="#569cd6" opacity="0.36"/>
<rect x="2445.0" y="342.0" width="2.0" height="1.3" fill="#d4d4d4" opacity="0.36"/>
<rect x="2447.0" y="342.0" width="7.0" height="1.3" fill="#9cdcfe" opacity="0.36"/>
<rect x="2454.0" y="342.0" width="2.0" height="1.3" fill="#d4d4d4" opacity="0.36"/>
<rect x="2456.0" y="342.0" width="6.0" height="1.3" fill="#dcdcaa" opacity="0.36"/>
<rect x="2462.0" y="342.0" width="1.0" height="1.3" fill="#da70d6" opacity="0.36"/>
<rect x="2463.0" y="342.0" width="1.0" height="1.3" fill="#da70d6" opacity="0.36"/>
<rect x="2464.0" y="342.0" width="1.0" height="1.3" fill="#ffd700" opacity="0.36"/>
<rect x="2466.0" y="342.0" width="1.0" height="1.3" fill="#ffd700" opacity="0.36"/>
<rect x="2441.0" y="344.0" width="10.0" height="1.3" fill="#6a9955" opacity="0.36"/>
<rect x="2441.0" y="346.0" width="5.0" height="1.3" fill="#9cdcfe" opacity="0.36"/>
<rect x="2447.0" y="346.0" width="1.0" height="1.3" fill="#d4d4d4" opacity="0.36"/>
<rect x="2449.0" y="346.0" width="5.0" height="1.3" fill="#569cd6" opacity="0.36"/>
<rect x="2455.0" y="346.0" width="7.0" height="1.3" fill="#9cdcfe" opacity="0.36"/>
<rect x="2463.0" y="346.0" width="8.0" height="1.3" fill="#dcdcaa" opacity="0.36"/>
<rect x="2441.0" y="348.0" width="30.0" height="1.3" fill="#6a9955" opacity="0.36"/>
<rect x="2472.0" y="348.0" width="18.0" height="1.3" fill="#6a9955" opacity="0.36"/>
<rect x="2441.0" y="350.0" width="9.0" height="1.3" fill="#9cdcfe" opacity="0.36"/>
<rect x="2451.0" y="350.0" width="1.0" height="1.3" fill="#d4d4d4" opacity="0.36"/>
<rect x="2453.0" y="350.0" width="3.0" height="1.3" fill="#569cd6" opacity="0.36"/>
<rect x="2457.0" y="350.0" width="7.0" height="1.3" fill="#d4d4d4" opacity="0.36"/>
<rect x="2464.0" y="350.0" width="8.0" height="1.3" fill="#4ec9b0" opacity="0.36"/>
<rect x="2472.0" y="350.0" width="1.0" height="1.3" fill="#da70d6" opacity="0.36"/>
<rect x="2473.0" y="350.0" width="1.0" height="1.3" fill="#179fff" opacity="0.36"/>
<rect x="2445.0" y="352.0" width="1.0" height="1.3" fill="#ffd700" opacity="0.36"/>
<rect x="2447.0" y="352.0" width="6.0" height="1.3" fill="#ce9178" opacity="0.36"/>
<rect x="2454.0" y="352.0" width="18.0" height="1.3" fill="#ce9178" opacity="0.36"/>
<rect x="2473.0" y="352.0" width="50.0" height="1.3" fill="#ce9178" opacity="0.36"/>
<rect x="2445.0" y="354.0" width="1.0" height="1.3" fill="#ffd700" opacity="0.36"/>
<rect x="2447.0" y="354.0" width="10.0" height="1.3" fill="#ce9178" opacity="0.36"/>
<rect x="2458.0" y="354.0" width="9.0" height="1.3" fill="#ce9178" opacity="0.36"/>
<rect x="2468.0" y="354.0" width="16.0" height="1.3" fill="#ce9178" opacity="0.36"/>
<rect x="2445.0" y="356.0" width="1.0" height="1.3" fill="#ffd700" opacity="0.36"/>
<rect x="2446.0" y="356.0" width="9.0" height="1.3" fill="#ce9178" opacity="0.36"/>
<rect x="2455.0" y="356.0" width="1.0" height="1.3" fill="#d4d4d4" opacity="0.36"/>
<rect x="2456.0" y="356.0" width="17.0" height="1.3" fill="#ce9178" opacity="0.36"/>
<rect x="2473.0" y="356.0" width="1.0" height="1.3" fill="#d4d4d4" opacity="0.36"/>
<rect x="2474.0" y="356.0" width="29.0" height="1.3" fill="#ce9178" opacity="0.36"/>
<rect x="2503.0" y="356.0" width="1.0" height="1.3" fill="#ffd700" opacity="0.36"/>
<rect x="2504.0" y="356.0" width="1.0" height="1.3" fill="#d4d4d4" opacity="0.36"/>
<rect x="2441.0" y="358.0" width="1.0" height="1.3" fill="#179fff" opacity="0.36"/>
<rect x="2442.0" y="358.0" width="1.0" height="1.3" fill="#da70d6" opacity="0.36"/>
<rect x="2443.0" y="358.0" width="1.0" height="1.3" fill="#d4d4d4" opacity="0.36"/>
<rect x="2441.0" y="360.0" width="20.0" height="1.3" fill="#6a9955" opacity="0.36"/>
<rect x="2441.0" y="362.0" width="2.0" height="1.3" fill="#c586c0" opacity="0.36"/>
<rect x="2444.0" y="362.0" width="1.0" height="1.3" fill="#da70d6" opacity="0.36"/>
<rect x="2445.0" y="362.0" width="1.0" height="1.3" fill="#d4d4d4" opacity="0.36"/>
<rect x="2446.0" y="362.0" width="9.0" height="1.3" fill="#9cdcfe" opacity="0.36"/>
<rect x="2455.0" y="362.0" width="2.0" height="1.3" fill="#d4d4d4" opacity="0.36"/>
<rect x="2457.0" y="362.0" width="5.0" height="1.3" fill="#dcdcaa" opacity="0.36"/>
<rect x="2462.0" y="362.0" width="1.0" height="1.3" fill="#179fff" opacity="0.36"/>
<rect x="2463.0" y="362.0" width="5.0" height="1.3" fill="#9cdcfe" opacity="0.36"/>
<rect x="2468.0" y="362.0" width="1.0" height="1.3" fill="#179fff" opacity="0.36"/>
<rect x="2469.0" y="362.0" width="1.0" height="1.3" fill="#da70d6" opacity="0.36"/>
<rect x="2471.0" y="362.0" width="1.0" height="1.3" fill="#da70d6" opacity="0.36"/>
<rect x="2445.0" y="364.0" width="5.0" height="1.3" fill="#569cd6" opacity="0.36"/>
<rect x="2450.0" y="364.0" width="2.0" height="1.3" fill="#d4d4d4" opacity="0.36"/>
<rect x="2452.0" y="364.0" width="5.0" height="1.3" fill="#dcdcaa" opacity="0.36"/>
<rect x="2457.0" y="364.0" width="1.0" height="1.3" fill="#179fff" opacity="0.36"/>
<rect x="2458.0" y="364.0" width="12.0" height="1.3" fill="#ce9178" opacity="0.36"/>
<rect x="2471.0" y="364.0" width="1.0" height="1.3" fill="#d4d4d4" opacity="0.36"/>
<rect x="2473.0" y="364.0" width="9.0" height="1.3" fill="#9cdcfe" opacity="0.36"/>
<rect x="2482.0" y="364.0" width="2.0" height="1.3" fill="#d4d4d4" opacity="0.36"/>
<rect x="2484.0" y="364.0" width="8.0" height="1.3" fill="#dcdcaa" opacity="0.36"/>
<rect x="2492.0" y="364.0" width="1.0" height="1.3" fill="#ffd700" opacity="0.36"/>
<rect x="2493.0" y="364.0" width="1.0" height="1.3" fill="#ffd700" opacity="0.36"/>
<rect x="2494.0" y="364.0" width="1.0" height="1.3" fill="#179fff" opacity="0.36"/>
<rect x="2495.0" y="364.0" width="1.0" height="1.3" fill="#d4d4d4" opacity="0.36"/>
<rect x="2441.0" y="366.0" width="1.0" height="1.3" fill="#da70d6" opacity="0.36"/>
<rect x="2441.0" y="368.0" width="5.0" height="1.3" fill="#9cdcfe" opacity="0.36"/>
<rect x="2447.0" y="368.0" width="1.0" height="1.3" fill="#d4d4d4" opacity="0.36"/>
<rect x="2449.0" y="368.0" width="2.0" height="1.3" fill="#4ec9b0" opacity="0.36"/>
<rect x="2451.0" y="368.0" width="2.0" height="1.3" fill="#d4d4d4" opacity="0.36"/>
<rect x="2453.0" y="368.0" width="4.0" height="1.3" fill="#dcdcaa" opacity="0.36"/>
<rect x="2457.0" y="368.0" width="1.0" height="1.3" fill="#da70d6" opacity="0.36"/>
<rect x="2458.0" y="368.0" width="7.0" height="1.3" fill="#ce9178" opacity="0.36"/>
<rect x="2465.0" y="368.0" width="1.0" height="1.3" fill="#da70d6" opacity="0.36"/>
<rect x="2466.0" y="368.0" width="2.0" height="1.3" fill="#d4d4d4" opacity="0.36"/>
<rect x="2468.0" y="368.0" width="5.0" height="1.3" fill="#dcdcaa" opacity="0.36"/>
<rect x="2473.0" y="368.0" width="1.0" height="1.3" fill="#da70d6" opacity="0.36"/>
<rect x="2474.0" y="368.0" width="6.0" height="1.3" fill="#ce9178" opacity="0.36"/>
<rect x="2480.0" y="368.0" width="1.0" height="1.3" fill="#d4d4d4" opacity="0.36"/>
<rect x="2481.0" y="368.0" width="5.0" height="1.3" fill="#9cdcfe" opacity="0.36"/>
<rect x="2486.0" y="368.0" width="1.0" height="1.3" fill="#179fff" opacity="0.36"/>
<rect x="2487.0" y="368.0" width="6.0" height="1.3" fill="#ce9178" opacity="0.36"/>
<rect x="2493.0" y="368.0" width="1.0" height="1.3" fill="#179fff" opacity="0.36"/>
<rect x="2494.0" y="368.0" width="1.0" height="1.3" fill="#da70d6" opacity="0.36"/>
<rect x="2495.0" y="368.0" width="2.0" height="1.3" fill="#d4d4d4" opacity="0.36"/>
<rect x="2497.0" y="368.0" width="4.0" height="1.3" fill="#dcdcaa" opacity="0.36"/>
<rect x="2501.0" y="368.0" width="1.0" height="1.3" fill="#da70d6" opacity="0.36"/>
<rect x="2502.0" y="368.0" width="1.0" height="1.3" fill="#da70d6" opacity="0.36"/>
<rect x="2503.0" y="368.0" width="1.0" height="1.3" fill="#d4d4d4" opacity="0.36"/>
<rect x="2441.0" y="370.0" width="2.0" height="1.3" fill="#c586c0" opacity="0.36"/>
<rect x="2443.0" y="370.0" width="1.0" height="1.3" fill="#da70d6" opacity="0.36"/>
<rect x="2444.0" y="370.0" width="5.0" height="1.3" fill="#dcdcaa" opacity="0.36"/>
<rect x="2449.0" y="370.0" width="1.0" height="1.3" fill="#179fff" opacity="0.36"/>
<rect x="2450.0" y="370.0" width="5.0" height="1.3" fill="#9cdcfe" opacity="0.36"/>
<rect x="2455.0" y="370.0" width="1.0" height="1.3" fill="#179fff" opacity="0.36"/>
<rect x="2456.0" y="370.0" width="1.0" height="1.3" fill="#da70d6" opacity="0.36"/>
<rect x="2458.0" y="370.0" width="1.0" height="1.3" fill="#da70d6" opacity="0.36"/>
<rect x="2445.0" y="372.0" width="16.0" height="1.3" fill="#6a9955" opacity="0.36"/>
<rect x="2445.0" y="374.0" width="6.0" height="1.3" fill="#c586c0" opacity="0.36"/>
<rect x="2452.0" y="374.0" width="5.0" height="1.3" fill="#569cd6" opacity="0.36"/>
<rect x="2457.0" y="374.0" width="2.0" height="1.3" fill="#d4d4d4" opacity="0.36"/>
<rect x="2459.0" y="374.0" width="5.0" height="1.3" fill="#dcdcaa" opacity="0.36"/>
<rect x="2464.0" y="374.0" width="1.0" height="1.3" fill="#179fff" opacity="0.36"/>
<rect x="2465.0" y="374.0" width="14.0" height="1.3" fill="#ce9178" opacity="0.36"/>
<rect x="2479.0" y="374.0" width="1.0" height="1.3" fill="#179fff" opacity="0.36"/>
<rect x="2480.0" y="374.0" width="1.0" height="1.3" fill="#d4d4d4" opacity="0.36"/>
<rect x="2441.0" y="376.0" width="1.0" height="1.3" fill="#da70d6" opacity="0.36"/>
<rect x="2443.0" y="376.0" width="4.0" height="1.3" fill="#c586c0" opacity="0.36"/>
<rect x="2448.0" y="376.0" width="1.0" height="1.3" fill="#da70d6" opacity="0.36"/>
<rect x="2445.0" y="378.0" width="10.0" height="1.3" fill="#6a9955" opacity="0.36"/>
<rect x="2445.0" y="380.0" width="5.0" height="1.3" fill="#9cdcfe" opacity="0.36"/>
<rect x="2450.0" y="380.0" width="1.0" height="1.3" fill="#179fff" opacity="0.36"/>
<rect x="2451.0" y="380.0" width="10.0" height="1.3" fill="#ce9178" opacity="0.36"/>
<rect x="2461.0" y="380.0" width="1.0" height="1.3" fill="#179fff" opacity="0.36"/>
<rect x="2463.0" y="380.0" width="1.0" height="1.3" fill="#d4d4d4" opacity="0.36"/>
<rect x="2465.0" y="380.0" width="8.0" height="1.3" fill="#dcdcaa" opacity="0.36"/>
<rect x="2473.0" y="380.0" width="1.0" height="1.3" fill="#179fff" opacity="0.36"/>
<rect x="2474.0" y="380.0" width="5.0" height="1.3" fill="#9cdcfe" opacity="0.36"/>
<rect x="2479.0" y="380.0" width="1.0" height="1.3" fill="#ffd700" opacity="0.36"/>
<rect x="2480.0" y="380.0" width="10.0" height="1.3" fill="#ce9178" opacity="0.36"/>
<rect x="2490.0" y="380.0" width="1.0" height="1.3" fill="#ffd700" opacity="0.36"/>
<rect x="2491.0" y="380.0" width="1.0" height="1.3" fill="#179fff" opacity="0.36"/>
<rect x="2492.0" y="380.0" width="1.0" height="1.3" fill="#d4d4d4" opacity="0.36"/>
<rect x="2445.0" y="382.0" width="2.0" height="1.3" fill="#c586c0" opacity="0.36"/>
<rect x="2447.0" y="382.0" width="1.0" height="1.3" fill="#179fff" opacity="0.36"/>
<rect x="2448.0" y="382.0" width="5.0" height="1.3" fill="#9cdcfe" opacity="0.36"/>
<rect x="2453.0" y="382.0" width="1.0" height="1.3" fill="#ffd700" opacity="0.36"/>
<rect x="2454.0" y="382.0" width="10.0" height="1.3" fill="#ce9178" opacity="0.36"/>
<rect x="2464.0" y="382.0" width="1.0" height="1.3" fill="#ffd700" opacity="0.36"/>
<rect x="2466.0" y="382.0" width="2.0" height="1.3" fill="#d4d4d4" opacity="0.36"/>
<rect x="2469.0" y="382.0" width="5.0" height="1.3" fill="#9cdcfe" opacity="0.36"/>
<rect x="2474.0" y="382.0" width="1.0" height="1.3" fill="#ffd700" opacity="0.36"/>
<rect x="2475.0" y="382.0" width="10.0" height="1.3" fill="#ce9178" opacity="0.36"/>
<rect x="2485.0" y="382.0" width="1.0" height="1.3" fill="#ffd700" opacity="0.36"/>
<rect x="2486.0" y="382.0" width="1.0" height="1.3" fill="#179fff" opacity="0.36"/>
<rect x="2488.0" y="382.0" width="1.0" height="1.3" fill="#179fff" opacity="0.36"/>
<rect x="2449.0" y="384.0" width="6.0" height="1.3" fill="#c586c0" opacity="0.36"/>
<rect x="2456.0" y="384.0" width="5.0" height="1.3" fill="#569cd6" opacity="0.36"/>
<rect x="2461.0" y="384.0" width="2.0" height="1.3" fill="#d4d4d4" opacity="0.36"/>
<rect x="2463.0" y="384.0" width="5.0" height="1.3" fill="#dcdcaa" opacity="0.36"/>
<rect x="2468.0" y="384.0" width="1.0" height="1.3" fill="#ffd700" opacity="0.36"/>
<rect x="2469.0" y="384.0" width="1.0" height="1.3" fill="#ce9178" opacity="0.36"/>
<rect x="2470.0" y="384.0" width="8.0" height="1.3" fill="#ce9178" opacity="0.36"/>
<rect x="2478.0" y="384.0" width="1.0" height="1.3" fill="#ce9178" opacity="0.36"/>
<rect x="2479.0" y="384.0" width="1.0" height="1.3" fill="#ffd700" opacity="0.36"/>
<rect x="2480.0" y="384.0" width="1.0" height="1.3" fill="#d4d4d4" opacity="0.36"/>
<rect x="2445.0" y="386.0" width="1.0" height="1.3" fill="#179fff" opacity="0.36"/>
<rect x="2447.0" y="386.0" width="4.0" height="1.3" fill="#c586c0" opacity="0.36"/>
<rect x="2452.0" y="386.0" width="1.0" height="1.3" fill="#179fff" opacity="0.36"/>
<rect x="2449.0" y="388.0" width="14.0" height="1.3" fill="#6a9955" opacity="0.36"/>
<rect x="2449.0" y="390.0" width="2.0" height="1.3" fill="#c586c0" opacity="0.36"/>
<rect x="2451.0" y="390.0" width="1.0" height="1.3" fill="#ffd700" opacity="0.36"/>
<rect x="2452.0" y="390.0" width="1.0" height="1.3" fill="#d4d4d4" opacity="0.36"/>
<rect x="2453.0" y="390.0" width="5.0" height="1.3" fill="#dcdcaa" opacity="0.36"/>
<rect x="2458.0" y="390.0" width="1.0" height="1.3" fill="#da70d6" opacity="0.36"/>
<rect x="2459.0" y="390.0" width="5.0" height="1.3" fill="#9cdcfe" opacity="0.36"/>
<rect x="2464.0" y="390.0" width="1.0" height="1.3" fill="#179fff" opacity="0.36"/>
<rect x="2465.0" y="390.0" width="10.0" height="1.3" fill="#ce9178" opacity="0.36"/>
<rect x="2475.0" y="390.0" width="1.0" height="1.3" fill="#179fff" opacity="0.36"/>
<rect x="2476.0" y="390.0" width="1.0" height="1.3" fill="#da70d6" opacity="0.36"/>
<rect x="2478.0" y="390.0" width="3.0" height="1.3" fill="#d4d4d4" opacity="0.36"/>
<rect x="2482.0" y="390.0" width="5.0" height="1.3" fill="#9cdcfe" opacity="0.36"/>
<rect x="2487.0" y="390.0" width="1.0" height="1.3" fill="#da70d6" opacity="0.36"/>
<rect x="2488.0" y="390.0" width="10.0" height="1.3" fill="#ce9178" opacity="0.36"/>
<rect x="2498.0" y="390.0" width="1.0" height="1.3" fill="#da70d6" opacity="0.36"/>
<rect x="2500.0" y="390.0" width="2.0" height="1.3" fill="#d4d4d4" opacity="0.36"/>
<rect x="2503.0" y="390.0" width="1.0" height="1.3" fill="#b5cea8" opacity="0.36"/>
<rect x="2504.0" y="390.0" width="1.0" height="1.3" fill="#ffd700" opacity="0.36"/>
<rect x="2506.0" y="390.0" width="1.0" height="1.3" fill="#ffd700" opacity="0.36"/>
<rect x="2453.0" y="392.0" width="26.0" height="1.3" fill="#6a9955" opacity="0.36"/>
<rect x="2453.0" y="394.0" width="2.0" height="1.3" fill="#c586c0" opacity="0.36"/>
<rect x="2455.0" y="394.0" width="1.0" height="1.3" fill="#da70d6" opacity="0.36"/>
<rect x="2456.0" y="394.0" width="6.0" height="1.3" fill="#4ec9b0" opacity="0.36"/>
<rect x="2462.0" y="394.0" width="2.0" height="1.3" fill="#d4d4d4" opacity="0.36"/>
<rect x="2464.0" y="394.0" width="3.0" height="1.3" fill="#dcdcaa" opacity="0.36"/>
<rect x="2467.0" y="394.0" width="1.0" height="1.3" fill="#179fff" opacity="0.36"/>
<rect x="2468.0" y="394.0" width="12.0" height="1.3" fill="#ce9178" opacity="0.36"/>
<rect x="2480.0" y="394.0" width="1.0" height="1.3" fill="#179fff" opacity="0.36"/>
<rect x="2481.0" y="394.0" width="1.0" height="1.3" fill="#da70d6" opacity="0.36"/>
<rect x="2483.0" y="394.0" width="1.0" height="1.3" fill="#da70d6" opacity="0.36"/>
<rect x="2457.0" y="396.0" width="6.0" height="1.3" fill="#4ec9b0" opacity="0.36"/>
<rect x="2463.0" y="396.0" width="2.0" height="1.3" fill="#d4d4d4" opacity="0.36"/>
<rect x="2465.0" y="396.0" width="6.0" height="1.3" fill="#dcdcaa" opacity="0.36"/>
<rect x="2471.0" y="396.0" width="1.0" height="1.3" fill="#179fff" opacity="0.36"/>
<rect x="2472.0" y="396.0" width="12.0" height="1.3" fill="#ce9178" opacity="0.36"/>
<rect x="2484.0" y="396.0" width="1.0" height="1.3" fill="#179fff" opacity="0.36"/>
<rect x="2485.0" y="396.0" width="1.0" height="1.3" fill="#d4d4d4" opacity="0.36"/>
<rect x="2453.0" y="398.0" width="1.0" height="1.3" fill="#da70d6" opacity="0.36"/>
<rect x="2453.0" y="400.0" width="10.0" height="1.3" fill="#6a9955" opacity="0.36"/>
<rect x="2453.0" y="402.0" width="6.0" height="1.3" fill="#4ec9b0" opacity="0.36"/>
<rect x="2459.0" y="402.0" width="2.0" height="1.3" fill="#d4d4d4" opacity="0.36"/>
<rect x="2461.0" y="402.0" width="7.0" height="1.3" fill="#dcdcaa" opacity="0.36"/>
<rect x="2468.0" y="402.0" width="1.0" height="1.3" fill="#da70d6" opacity="0.36"/>
<rect x="2469.0" y="402.0" width="12.0" height="1.3" fill="#ce9178" opacity="0.36"/>
<rect x="2481.0" y="402.0" width="1.0" height="1.3" fill="#d4d4d4" opacity="0.36"/>
<rect x="2482.0" y="402.0" width="5.0" height="1.3" fill="#9cdcfe" opacity="0.36"/>
<rect x="2487.0" y="402.0" width="1.0" height="1.3" fill="#179fff" opacity="0.36"/>
<rect x="2488.0" y="402.0" width="6.0" height="1.3" fill="#ce9178" opacity="0.36"/>
<rect x="2494.0" y="402.0" width="1.0" height="1.3" fill="#179fff" opacity="0.36"/>
<rect x="2495.0" y="402.0" width="1.0" height="1.3" fill="#da70d6" opacity="0.36"/>
<rect x="2496.0" y="402.0" width="1.0" height="1.3" fill="#d4d4d4" opacity="0.36"/>
<rect x="2449.0" y="404.0" width="1.0" height="1.3" fill="#ffd700" opacity="0.36"/>
<rect x="2451.0" y="404.0" width="4.0" height="1.3" fill="#c586c0" opacity="0.36"/>
<rect x="2456.0" y="404.0" width="1.0" height="1.3" fill="#ffd700" opacity="0.36"/>
<rect x="2453.0" y="406.0" width="32.0" height="1.3" fill="#6a9955" opacity="0.36"/>
<rect x="2453.0" y="408.0" width="2.0" height="1.3" fill="#c586c0" opacity="0.36"/>
<rect x="2455.0" y="408.0" width="1.0" height="1.3" fill="#da70d6" opacity="0.36"/>
<rect x="2456.0" y="408.0" width="6.0" height="1.3" fill="#4ec9b0" opacity="0.36"/>
<rect x="2462.0" y="408.0" width="2.0" height="1.3" fill="#d4d4d4" opacity="0.36"/>
<rect x="2464.0" y="408.0" width="3.0" height="1.3" fill="#dcdcaa" opacity="0.36"/>
<rect x="2467.0" y="408.0" width="1.0" height="1.3" fill="#179fff" opacity="0.36"/>
<rect x="2468.0" y="408.0" width="12.0" height="1.3" fill="#ce9178" opacity="0.36"/>
<rect x="2480.0" y="408.0" width="1.0" height="1.3" fill="#179fff" opacity="0.36"/>
<rect x="2481.0" y="408.0" width="1.0" height="1.3" fill="#da70d6" opacity="0.36"/>
<rect x="2483.0" y="408.0" width="1.0" height="1.3" fill="#da70d6" opacity="0.36"/>
<rect x="2457.0" y="410.0" width="6.0" height="1.3" fill="#4ec9b0" opacity="0.36"/>
<rect x="2463.0" y="410.0" width="2.0" height="1.3" fill="#d4d4d4" opacity="0.36"/>
<rect x="2465.0" y="410.0" width="6.0" height="1.3" fill="#dcdcaa" opacity="0.36"/>
<rect x="2471.0" y="410.0" width="1.0" height="1.3" fill="#179fff" opacity="0.36"/>
<rect x="2472.0" y="410.0" width="12.0" height="1.3" fill="#ce9178" opacity="0.36"/>
<rect x="2484.0" y="410.0" width="1.0" height="1.3" fill="#179fff" opacity="0.36"/>
<rect x="2485.0" y="410.0" width="1.0" height="1.3" fill="#d4d4d4" opacity="0.36"/>
<rect x="2453.0" y="412.0" width="1.0" height="1.3" fill="#da70d6" opacity="0.36"/>
<rect x="2453.0" y="414.0" width="14.0" height="1.3" fill="#6a9955" opacity="0.36"/>
<rect x="2453.0" y="416.0" width="6.0" height="1.3" fill="#9cdcfe" opacity="0.36"/>
<rect x="2460.0" y="416.0" width="1.0" height="1.3" fill="#d4d4d4" opacity="0.36"/>
<rect x="2462.0" y="416.0" width="6.0" height="1.3" fill="#4ec9b0" opacity="0.36"/>
<rect x="2469.0" y="416.0" width="6.0" height="1.3" fill="#dcdcaa" opacity="0.36"/>
<rect x="2476.0" y="416.0" width="10.0" height="1.3" fill="#ce9178" opacity="0.36"/>
<rect x="2487.0" y="416.0" width="12.0" height="1.3" fill="#9cdcfe" opacity="0.36"/>
<rect x="2500.0" y="416.0" width="6.0" height="1.3" fill="#ce9178" opacity="0.36"/>
<rect x="2507.0" y="416.0" width="8.0" height="1.3" fill="#9cdcfe" opacity="0.36"/>
<rect x="2516.0" y="416.0" width="6.0" height="1.3" fill="#ce9178" opacity="0.36"/>
<rect x="2523.0" y="416.0" width="8.0" height="1.3" fill="#6a9955" opacity="0.36"/>
<rect x="2453.0" y="418.0" width="12.0" height="1.3" fill="#6a9955" opacity="0.36"/>
<rect x="2453.0" y="420.0" width="8.0" height="1.3" fill="#9cdcfe" opacity="0.36"/>
<rect x="2462.0" y="420.0" width="8.0" height="1.3" fill="#9cdcfe" opacity="0.36"/>
<rect x="2471.0" y="420.0" width="8.0" height="1.3" fill="#179fff" opacity="0.36"/>
<rect x="2480.0" y="420.0" width="10.0" height="1.3" fill="#ce9178" opacity="0.36"/>
<rect x="2491.0" y="420.0" width="6.0" height="1.3" fill="#dcdcaa" opacity="0.36"/>
<rect x="2498.0" y="420.0" width="6.0" height="1.3" fill="#ce9178" opacity="0.36"/>
<rect x="2505.0" y="420.0" width="10.0" height="1.3" fill="#9cdcfe" opacity="0.36"/>
<rect x="2516.0" y="420.0" width="8.0" height="1.3" fill="#d4d4d4" opacity="0.36"/>
<rect x="2525.0" y="420.0" width="4.0" height="1.3" fill="#ce9178" opacity="0.36"/>
<rect x="2530.0" y="420.0" width="5.0" height="1.3" fill="#4ec9b0" opacity="0.36"/>
<rect x="2453.0" y="422.0" width="10.0" height="1.3" fill="#6a9955" opacity="0.36"/>
<rect x="2453.0" y="426.0" width="6.0" height="1.3" fill="#d4d4d4" opacity="0.36"/>
<rect x="2460.0" y="426.0" width="4.0" height="1.3" fill="#d4d4d4" opacity="0.36"/>
<rect x="2465.0" y="426.0" width="12.0" height="1.3" fill="#ce9178" opacity="0.36"/>
<rect x="2457.0" y="428.0" width="20.0" height="1.3" fill="#6a9955" opacity="0.36"/>
<rect x="2478.0" y="428.0" width="14.0" height="1.3" fill="#6a9955" opacity="0.36"/>
<rect x="2493.0" y="428.0" width="10.0" height="1.3" fill="#6a9955" opacity="0.36"/>
<rect x="2457.0" y="430.0" width="8.0" height="1.3" fill="#9cdcfe" opacity="0.36"/>
<rect x="2466.0" y="430.0" width="4.0" height="1.3" fill="#d4d4d4" opacity="0.36"/>
<rect x="2457.0" y="432.0" width="18.0" height="1.3" fill="#9cdcfe" opacity="0.36"/>
<rect x="2476.0" y="432.0" width="6.0" height="1.3" fill="#d4d4d4" opacity="0.36"/>
<rect x="2483.0" y="432.0" width="12.0" height="1.3" fill="#d4d4d4" opacity="0.36"/>
<rect x="2457.0" y="434.0" width="3.0" height="1.3" fill="#c586c0" opacity="0.36"/>
<rect x="2461.0" y="434.0" width="10.0" height="1.3" fill="#ce9178" opacity="0.36"/>
<rect x="2472.0" y="434.0" width="14.0" height="1.3" fill="#d4d4d4" opacity="0.36"/>
<rect x="2453.0" y="436.0" width="6.0" height="1.3" fill="#d4d4d4" opacity="0.36"/>
<rect x="2457.0" y="438.0" width="42.0" height="1.3" fill="#6a9955" opacity="0.36"/>
<rect x="2457.0" y="440.0" width="8.0" height="1.3" fill="#9cdcfe" opacity="0.36"/>
<rect x="2466.0" y="440.0" width="6.0" height="1.3" fill="#d4d4d4" opacity="0.36"/>
<rect x="2473.0" y="440.0" width="8.0" height="1.3" fill="#d4d4d4" opacity="0.36"/>
<rect x="2482.0" y="440.0" width="8.0" height="1.3" fill="#ce9178" opacity="0.36"/>
<rect x="2457.0" y="442.0" width="18.0" height="1.3" fill="#9cdcfe" opacity="0.36"/>
<rect x="2476.0" y="442.0" width="6.0" height="1.3" fill="#d4d4d4" opacity="0.36"/>
<rect x="2483.0" y="442.0" width="12.0" height="1.3" fill="#d4d4d4" opacity="0.36"/>
<rect x="2457.0" y="444.0" width="3.0" height="1.3" fill="#c586c0" opacity="0.36"/>
<rect x="2461.0" y="444.0" width="12.0" height="1.3" fill="#ce9178" opacity="0.36"/>
<rect x="2474.0" y="444.0" width="12.0" height="1.3" fill="#4ec9b0" opacity="0.36"/>
<rect x="2453.0" y="446.0" width="1.0" height="1.3" fill="#179fff" opacity="0.36"/>
<rect x="2453.0" y="448.0" width="6.0" height="1.3" fill="#c586c0" opacity="0.36"/>
<rect x="2460.0" y="448.0" width="14.0" height="1.3" fill="#569cd6" opacity="0.36"/>
<rect x="2475.0" y="448.0" width="14.0" height="1.3" fill="#ce9178" opacity="0.36"/>
<rect x="2490.0" y="448.0" width="6.0" height="1.3" fill="#d4d4d4" opacity="0.36"/>
<rect x="2497.0" y="448.0" width="18.0" height="1.3" fill="#ce9178" opacity="0.36"/>
<rect x="2516.0" y="448.0" width="2.0" height="1.3" fill="#d4d4d4" opacity="0.36"/>
<rect x="2449.0" y="452.0" width="1.0" height="1.3" fill="#ffd700" opacity="0.36"/>
<rect x="2445.0" y="454.0" width="1.0" height="1.3" fill="#179fff" opacity="0.36"/>
<rect x="2441.0" y="456.0" width="1.0" height="1.3" fill="#da70d6" opacity="0.36"/>
<rect x="2443.0" y="456.0" width="4.0" height="1.3" fill="#c586c0" opacity="0.36"/>
<rect x="2448.0" y="456.0" width="1.0" height="1.3" fill="#da70d6" opacity="0.36"/>
<rect x="2445.0" y="458.0" width="8.0" height="1.3" fill="#9cdcfe" opacity="0.36"/>
<rect x="2454.0" y="458.0" width="18.0" height="1.3" fill="#ce9178" opacity="0.36"/>
<rect x="2473.0" y="458.0" width="1.0" height="1.3" fill="#d4d4d4" opacity="0.36"/>
<rect x="2449.0" y="460.0" width="6.0" height="1.3" fill="#c586c0" opacity="0.36"/>
<rect x="2456.0" y="460.0" width="14.0" height="1.3" fill="#ce9178" opacity="0.36"/>
<rect x="2471.0" y="460.0" width="8.0" height="1.3" fill="#4ec9b0" opacity="0.36"/>
<rect x="2480.0" y="460.0" width="4.0" height="1.3" fill="#d4d4d4" opacity="0.36"/>
<rect x="2485.0" y="460.0" width="12.0" height="1.3" fill="#ce9178" opacity="0.36"/>
<rect x="2498.0" y="460.0" width="2.0" height="1.3" fill="#d4d4d4" opacity="0.36"/>
<rect x="2445.0" y="462.0" width="1.0" height="1.3" fill="#179fff" opacity="0.36"/>
<rect x="2445.0" y="464.0" width="6.0" height="1.3" fill="#c586c0" opacity="0.36"/>
<rect x="2452.0" y="464.0" width="14.0" height="1.3" fill="#569cd6" opacity="0.36"/>
<rect x="2437.0" y="466.0" width="1.0" height="1.3" fill="#ffd700" opacity="0.36"/>
<rect x="2439.0" y="466.0" width="4.0" height="1.3" fill="#c586c0" opacity="0.36"/>
<rect x="2444.0" y="466.0" width="1.0" height="1.3" fill="#ffd700" opacity="0.36"/>
<rect x="2441.0" y="468.0" width="6.0" height="1.3" fill="#c586c0" opacity="0.36"/>
<rect x="2448.0" y="468.0" width="10.0" height="1.3" fill="#d4d4d4" opacity="0.36"/>
<rect x="2459.0" y="468.0" width="18.0" height="1.3" fill="#ce9178" opacity="0.36"/>
<rect x="2478.0" y="468.0" width="2.0" height="1.3" fill="#d4d4d4" opacity="0.36"/>
<rect x="2437.0" y="470.0" width="1.0" height="1.3" fill="#ffd700" opacity="0.36"/>
<rect x="2433.0" y="472.0" width="1.0" height="1.3" fill="#179fff" opacity="0.36"/>
<rect x="2429.0" y="480.0" width="3.0" height="1.3" fill="#6a9955" opacity="0.36"/>
<rect x="2429.0" y="482.0" width="2.0" height="1.3" fill="#6a9955" opacity="0.36"/>
<rect x="2432.0" y="482.0" width="8.0" height="1.3" fill="#6a9955" opacity="0.36"/>
<rect x="2441.0" y="482.0" width="10.0" height="1.3" fill="#6a9955" opacity="0.36"/>
<rect x="2452.0" y="482.0" width="14.0" height="1.3" fill="#6a9955" opacity="0.36"/>
<rect x="2429.0" y="484.0" width="2.0" height="1.3" fill="#6a9955" opacity="0.36"/>
<rect x="2432.0" y="484.0" width="7.0" height="1.3" fill="#6a9955" opacity="0.36"/>
<rect x="2440.0" y="484.0" width="18.0" height="1.3" fill="#6a9955" opacity="0.36"/>
<rect x="2429.0" y="486.0" width="3.0" height="1.3" fill="#6a9955" opacity="0.36"/>
<rect x="2429.0" y="488.0" width="6.0" height="1.3" fill="#569cd6" opacity="0.36"/>
<rect x="2436.0" y="488.0" width="8.0" height="1.3" fill="#569cd6" opacity="0.36"/>
<rect x="2445.0" y="488.0" width="8.0" height="1.3" fill="#dcdcaa" opacity="0.36"/>
<rect x="2429.0" y="490.0" width="1.0" height="1.3" fill="#da70d6" opacity="0.36"/>
<rect x="2433.0" y="492.0" width="7.0" height="1.3" fill="#4ec9b0" opacity="0.36"/>
<rect x="2441.0" y="492.0" width="8.0" height="1.3" fill="#d4d4d4" opacity="0.36"/>
<rect x="2450.0" y="492.0" width="5.0" height="1.3" fill="#ce9178" opacity="0.36"/>
<rect x="2456.0" y="492.0" width="10.0" height="1.3" fill="#ce9178" opacity="0.36"/>
<rect x="2433.0" y="494.0" width="2.0" height="1.3" fill="#c586c0" opacity="0.36"/>
<rect x="2436.0" y="494.0" width="6.0" height="1.3" fill="#4ec9b0" opacity="0.36"/>
<rect x="2443.0" y="494.0" width="6.0" height="1.3" fill="#d4d4d4" opacity="0.36"/>
<rect x="2450.0" y="494.0" width="4.0" height="1.3" fill="#ce9178" opacity="0.36"/>
<rect x="2455.0" y="494.0" width="8.0" height="1.3" fill="#4ec9b0" opacity="0.36"/>
<rect x="2464.0" y="494.0" width="22.0" height="1.3" fill="#ce9178" opacity="0.36"/>
<rect x="2437.0" y="496.0" width="6.0" height="1.3" fill="#c586c0" opacity="0.36"/>
<rect x="2444.0" y="496.0" width="12.0" height="1.3" fill="#569cd6" opacity="0.36"/>
<rect x="2457.0" y="496.0" width="2.0" height="1.3" fill="#d4d4d4" opacity="0.36"/>
<rect x="2460.0" y="496.0" width="6.0" height="1.3" fill="#d4d4d4" opacity="0.36"/>
<rect x="2433.0" y="498.0" width="1.0" height="1.3" fill="#179fff" opacity="0.36"/>
<rect x="2435.0" y="498.0" width="4.0" height="1.3" fill="#c586c0" opacity="0.36"/>
<rect x="2440.0" y="498.0" width="1.0" height="1.3" fill="#179fff" opacity="0.36"/>
<rect x="2437.0" y="500.0" width="6.0" height="1.3" fill="#c586c0" opacity="0.36"/>
<rect x="2444.0" y="500.0" width="14.0" height="1.3" fill="#569cd6" opacity="0.36"/>
<rect x="2459.0" y="500.0" width="6.0" height="1.3" fill="#d4d4d4" opacity="0.36"/>
<rect x="2466.0" y="500.0" width="6.0" height="1.3" fill="#d4d4d4" opacity="0.36"/>
<rect x="2473.0" y="500.0" width="22.0" height="1.3" fill="#ce9178" opacity="0.36"/>
<rect x="2496.0" y="500.0" width="3.0" height="1.3" fill="#d4d4d4" opacity="0.36"/>
<rect x="2433.0" y="502.0" width="1.0" height="1.3" fill="#179fff" opacity="0.36"/>
<rect x="2429.0" y="504.0" width="1.0" height="1.3" fill="#da70d6" opacity="0.36"/>
<rect x="2425.0" y="506.0" width="1.0" height="1.3" fill="#ffd700" opacity="0.36"/>
<rect x="2469.5" y="384" width="9" height="2.2" fill="#d18616"/>
<g transform="translate(16.2 16.4) scale(0.302)"><path d="M71,4 L96,15 L96,85 L71,96 L30,58 L12,72 L4,68 L4,32 L12,28 L30,42 Z M71,30 L44,50 L71,70 Z" fill="#2196e8" fill-rule="evenodd"/><path d="M71,4 L96,15 L96,85 L71,96 Z" fill="#1f9cf0"/><path d="M71,4 L30,42 L12,28 L4,32 L71,96 L71,70 L44,50 L71,30 Z" fill="#0d7ad0" opacity="0.55"/></g>
<circle cx="602.80" cy="30.60" r="2.00" fill="#cccccc"/><circle cx="612.00" cy="30.60" r="2.00" fill="#cccccc"/><circle cx="621.20" cy="30.60" r="2.00" fill="#cccccc"/>
<path d="M772,31.2 L750.5,31.2 M759.5,22 L750.5,31.2 L759.5,40.4" stroke="#858585" stroke-width="1.8" fill="none" />
<path d="M796,31.2 L817.5,31.2 M808.5,22 L817.5,31.2 L808.5,40.4" stroke="#858585" stroke-width="1.8" fill="none" />
<circle cx="1272.50" cy="27.00" r="8.00" stroke="#cccccc" stroke-width="1.7" fill="none"/>
<line x1="1266.50" y1="33.00" x2="1258.00" y2="42.00" stroke="#cccccc" stroke-width="1.7" stroke-linecap="butt"/>
<rect x="2178.60" y="18.40" width="24.60" height="23.80" rx="2.5" stroke="#cccccc" stroke-width="1.8" fill="none"/>
<path d="M2179,19 h9.5 v22.6 h-9.5 z" fill="#cccccc"/>
<rect x="2225.40" y="18.40" width="24.60" height="23.80" rx="2.5" stroke="#cccccc" stroke-width="1.8" fill="none"/>
<line x1="2225.40" y1="35.00" x2="2250.00" y2="35.00" stroke="#cccccc" stroke-width="1.8" stroke-linecap="butt"/>
<rect x="2272.00" y="18.40" width="24.60" height="23.80" rx="2.5" stroke="#cccccc" stroke-width="1.8" fill="none"/>
<line x1="2286.00" y1="18.40" x2="2286.00" y2="42.20" stroke="#cccccc" stroke-width="1.8" stroke-linecap="butt"/>
<rect x="2320.60" y="19.50" width="8.60" height="21.50" rx="2" stroke="#cccccc" stroke-width="1.8" fill="none"/>
<rect x="2335.60" y="19.50" width="7.60" height="7.60" rx="2" stroke="#cccccc" stroke-width="1.8" fill="none"/>
<rect x="2335.60" y="33.40" width="7.60" height="7.60" rx="2" stroke="#cccccc" stroke-width="1.8" fill="none"/>
<line x1="2380.80" y1="30.00" x2="2395.80" y2="30.00" stroke="#cccccc" stroke-width="1.5" stroke-linecap="butt"/>
<rect x="2449.70" y="25.50" width="11.00" height="11.50" rx="2.5" stroke="#cccccc" stroke-width="1.5" fill="none"/>
<path d="M2452.5,25 C2452.5,23.2 2453.5,22.8 2455,22.8 L2460.5,22.8 C2462.8,22.8 2463.8,24 2463.8,26 L2463.8,32 C2463.8,33.4 2463.2,34 2462,34.2" stroke="#cccccc" stroke-width="1.5" fill="none" />
<path d="M2518.80,23.20 L2533.20,37.60 M2533.20,23.20 L2518.80,37.60" stroke="#cccccc" stroke-width="1.5" fill="none" />
<rect x="0" y="149.4" width="3.4" height="86.4" fill="#0078d4"/>
<path d="M36.5,96.5 L36.5,88 Q36.5,86.3 38.2,86.3 L52,86.3 L60,94.3 L60,113.5 Q60,115.2 58.3,115.2 L38.2,115.2 Q36.5,115.2 36.5,113.5 L36.5,96.5 M52,86.3 L52,94.3 L60,94.3" stroke="#868686" stroke-width="2.5" fill="none" stroke-linejoin="round"/>
<path d="M36.5,97.8 L26.3,97.8 Q24.6,97.8 24.6,99.5 L24.6,125 Q24.6,126.7 26.3,126.7 L46,126.7 Q47.7,126.7 47.7,125 L47.7,115.2" stroke="#868686" stroke-width="2.5" fill="none" stroke-linejoin="round"/>
<circle cx="48.80" cy="186.00" r="13.60" stroke="#d7d7d7" stroke-width="2.5" fill="none"/>
<line x1="39.20" y1="196.20" x2="24.80" y2="212.40" stroke="#d7d7d7" stroke-width="2.5" stroke-linecap="butt"/>
<circle cx="33.30" cy="263.80" r="5.40" stroke="#868686" stroke-width="2.5" fill="none"/>
<circle cx="33.30" cy="293.60" r="5.40" stroke="#868686" stroke-width="2.5" fill="none"/>
<circle cx="52.60" cy="271.40" r="5.40" stroke="#868686" stroke-width="2.5" fill="none"/>
<path d="M33.3,269.2 L33.3,288.2 M52.6,276.8 C52.4,280.8 50,282.4 46,282.4 L40.5,282.4 C36.5,282.4 34.4,284.4 33.8,287.6" stroke="#868686" stroke-width="2.5" fill="none" />
<path d="M36.8,362.4 L36.8,346 L62,362.4 L46.4,373.4" stroke="#868686" stroke-width="2.5" fill="none" stroke-linejoin="round"/>
<ellipse cx="32.4" cy="376.6" rx="5.6" ry="8.6" stroke="#868686" stroke-width="2.4" fill="none"/>
<path d="M27,373.8 L37.8,373.8 M21.8,369.4 L26.6,372.2 M43,369.4 L38.2,372.2 M21,377.8 L26.6,377.8 M43.8,377.8 L38.2,377.8 M22.4,386.2 L27.2,382.6 M42.4,386.2 L37.6,382.6" stroke="#868686" stroke-width="2.3" fill="none" />
<path d="M23,439.7 L39.5,439.7 L39.5,455.5 L55.3,455.5 L55.3,471.3 L23,471.3 Z M23,455.5 L39.5,455.5 L39.5,471.3" stroke="#868686" stroke-width="2.5" fill="none" stroke-linejoin="round"/>
<rect x="47.30" y="431.60" width="15.90" height="15.40" rx="2" stroke="#868686" stroke-width="2.5" fill="none"/>
<circle cx="43.00" cy="1198.40" r="20.30" stroke="#868686" stroke-width="2.8" fill="none"/>
<circle cx="43.00" cy="1194.40" r="8.40" stroke="#868686" stroke-width="2.8" fill="none"/>
<path d="M29.6,1213.6 C31.4,1206.4 36.4,1203.6 43,1203.6 C49.6,1203.6 54.6,1206.4 56.4,1213.6" stroke="#868686" stroke-width="2.8" fill="none" />
<polygon points="39.39,1271.40 39.40,1265.28 46.20,1265.28 46.21,1271.40 50.43,1273.15 54.76,1268.83 59.57,1273.64 55.25,1277.97 57.00,1282.19 63.12,1282.20 63.12,1289.00 57.00,1289.01 55.25,1293.23 59.57,1297.56 54.76,1302.37 50.43,1298.05 46.21,1299.80 46.20,1305.92 39.40,1305.92 39.39,1299.80 35.17,1298.05 30.84,1302.37 26.03,1297.56 30.35,1293.23 28.60,1289.01 22.48,1289.00 22.48,1282.20 28.60,1282.19 30.35,1277.97 26.03,1273.64 30.84,1268.83 35.17,1273.15" stroke="#868686" stroke-width="2.9" fill="none" stroke-linejoin="round"/>
<circle cx="42.80" cy="1285.60" r="5.00" stroke="#868686" stroke-width="2.9" fill="none"/>
<path d="M286.2,84.6 A10,10 0 1 0 294.6,83.6" stroke="#cccccc" stroke-width="1.8" fill="none" />
<path d="M280.3,83.3 L287,83.3 L287,90" stroke="#cccccc" stroke-width="1.8" fill="none" />
<line x1="325.00" y1="85.10" x2="351.00" y2="85.10" stroke="#cccccc" stroke-width="1.8" stroke-linecap="butt"/>
<line x1="325.00" y1="90.60" x2="351.00" y2="90.60" stroke="#cccccc" stroke-width="1.8" stroke-linecap="butt"/>
<line x1="325.00" y1="96.20" x2="339.80" y2="96.20" stroke="#cccccc" stroke-width="1.8" stroke-linecap="butt"/>
<line x1="325.00" y1="101.80" x2="339.80" y2="101.80" stroke="#cccccc" stroke-width="1.8" stroke-linecap="butt"/>
<path d="M342.60,95.60 L349.60,102.60 M349.60,95.60 L342.60,102.60" stroke="#cccccc" stroke-width="1.8" fill="none" />
<path d="M382.5,103.7 L374.7,103.7 L374.7,82.1 L386.5,82.1 L392.7,88.3 L392.7,92.5 M386,82.1 L386,88.8 L392.7,88.8" stroke="#cccccc" stroke-width="1.8" fill="none" stroke-linejoin="round"/>
<path d="M392.6,95.2 L392.6,108.4 M386,101.8 L399.2,101.8" stroke="#cccccc" stroke-width="1.8" fill="none" />
<line x1="420.30" y1="85.10" x2="440.90" y2="85.10" stroke="#cccccc" stroke-width="1.8" stroke-linecap="butt"/>
<line x1="420.30" y1="90.60" x2="442.90" y2="90.60" stroke="#cccccc" stroke-width="1.8" stroke-linecap="butt"/>
<line x1="420.30" y1="96.20" x2="436.80" y2="96.20" stroke="#cccccc" stroke-width="1.8" stroke-linecap="butt"/>
<line x1="420.30" y1="101.80" x2="434.80" y2="101.80" stroke="#cccccc" stroke-width="1.8" stroke-linecap="butt"/>
<rect x="468.20" y="89.80" width="14.00" height="14.00" rx="2.2" stroke="#cccccc" stroke-width="1.8" fill="none"/>
<path d="M473.6,87 L473.6,85.8 Q473.6,83.6 475.8,83.6 L485.6,83.6 Q487.8,83.6 487.8,85.8 L487.8,95.6 Q487.8,97.8 485.6,97.8 L484.5,97.8" stroke="#cccccc" stroke-width="1.8" fill="none" />
<line x1="471.00" y1="96.40" x2="479.80" y2="96.40" stroke="#cccccc" stroke-width="1.8" stroke-linecap="butt"/>
<path d="M96.10,182.50 L104.80,191.90 L113.50,182.50" stroke="#cccccc" stroke-width="1.8" fill="none" />
<path d="M422.1,164.4 L422.1,168.6 L449.8,168.6 L449.8,164.4" stroke="#cccccc" stroke-width="1.6" fill="none" />
<rect x="463.9" y="162.1" width="8.2" height="7.6" fill="#cccccc"/>
<path d="M479.8,147.8 L479.8,162 M473.6,151.4 L486,158.5 M486,151.4 L473.6,158.5" stroke="#cccccc" stroke-width="1.9" fill="none" />
<rect x="470.70" y="215.50" width="18.20" height="10.80" rx="2.4" stroke="#cccccc" stroke-width="1.8" fill="none"/>
<path d="M478.6,212.2 L490.6,212.2 Q492.8,212.2 492.8,214.4 L492.8,220.6 Q492.8,222 491.6,222.2" stroke="#cccccc" stroke-width="1.6" fill="none" />
<path d="M479.6,205.8 L476.2,205.8 Q473.6,205.8 473.6,208.4 L473.6,212.6 M470.6,209.8 L473.6,213 L476.6,209.8" stroke="#cccccc" stroke-width="1.5" fill="none" />
<text x="480.6" y="209" font-family="Liberation Sans, sans-serif" font-size="8.6" font-weight="bold" fill="#cccccc">ab</text>
<text x="474.6" y="224.2" font-family="Liberation Sans, sans-serif" font-size="9" font-weight="bold" fill="#cccccc">ac</text>
<circle cx="468.90" cy="251.50" r="2.00" fill="#cccccc"/><circle cx="477.90" cy="251.50" r="2.00" fill="#cccccc"/><circle cx="486.90" cy="251.50" r="2.00" fill="#cccccc"/>
<path d="M111.60,357.70 L120.30,367.10 L129.00,357.70" stroke="#cccccc" stroke-width="1.8" fill="none" />
<path d="M111.60,436.90 L120.30,446.30 L129.00,436.90" stroke="#cccccc" stroke-width="1.8" fill="none" />
<g transform="translate(146.40 354.70) scale(1.0000 1.0000)"><path d="M3.7,15.4 C3.4,14.4 3.6,13.6 3.2,12.6 C1.4,11.4 0.1,9.4 0.3,6.6 C0.5,3.2 2.8,0.9 6.2,0.3 C7.8,0 9.6,0.1 10.9,0.7 C12.4,0.1 14.4,0 16,0.5 C19,1.3 21,3.6 21.8,6.6 C22.1,7.4 22,8 21.4,8.2 C20.6,8.6 19.9,9.2 19.7,10 L19.7,15.4 L15.9,15.4 L15.9,11.6 L10.9,11.6 L10.9,15.4 L7.9,15.4 L7.9,12.2 C7.4,11.4 6.8,10.8 6.2,10.8 C5.6,11.2 5.5,12 5.7,13 L5.9,15.4 Z" fill="#a67dd6"/><path d="M10.9,0.9 C12,3 11.8,5.6 10.4,7.2 C9,8.6 7,8.4 5.8,7" fill="none" stroke="#4a2a72" stroke-width="0.7"/><path d="M1.8,6 L3.2,6 M1.8,8.6 L3,8.6" stroke="#4a2a72" stroke-width="0.6"/></g>
<g transform="translate(146.40 433.90) scale(1.0000 1.0000)"><path d="M3.7,15.4 C3.4,14.4 3.6,13.6 3.2,12.6 C1.4,11.4 0.1,9.4 0.3,6.6 C0.5,3.2 2.8,0.9 6.2,0.3 C7.8,0 9.6,0.1 10.9,0.7 C12.4,0.1 14.4,0 16,0.5 C19,1.3 21,3.6 21.8,6.6 C22.1,7.4 22,8 21.4,8.2 C20.6,8.6 19.9,9.2 19.7,10 L19.7,15.4 L15.9,15.4 L15.9,11.6 L10.9,11.6 L10.9,15.4 L7.9,15.4 L7.9,12.2 C7.4,11.4 6.8,10.8 6.2,10.8 C5.6,11.2 5.5,12 5.7,13 L5.9,15.4 Z" fill="#a67dd6"/><path d="M10.9,0.9 C12,3 11.8,5.6 10.4,7.2 C9,8.6 7,8.4 5.8,7" fill="none" stroke="#4a2a72" stroke-width="0.7"/><path d="M1.8,6 L3.2,6 M1.8,8.6 L3,8.6" stroke="#4a2a72" stroke-width="0.6"/></g>
<rect x="428.10" y="480.30" width="14.00" height="11.40" rx="2.4" stroke="#ffffff" stroke-width="1.8" fill="none"/>
<path d="M436.4,470.6 L434.2,470.6 Q431.6,470.6 431.6,473.2 L431.6,477.4 M428.6,474.4 L431.6,477.6 L434.6,474.4" stroke="#ffffff" stroke-width="1.5" fill="none" />
<text x="438" y="476.4" font-family="Liberation Sans, sans-serif" font-size="9.4" font-weight="bold" fill="#ffffff">b</text>
<text x="432.4" y="489.4" font-family="Liberation Sans, sans-serif" font-size="9.4" font-weight="bold" fill="#ffffff">c</text>
<path d="M469.40,473.00 L484.60,488.40 M484.60,473.00 L469.40,488.40" stroke="#ffffff" stroke-width="1.8" fill="none" />
<g transform="translate(544.20 86.20) scale(1.0000 1.0000)"><path d="M3.7,15.4 C3.4,14.4 3.6,13.6 3.2,12.6 C1.4,11.4 0.1,9.4 0.3,6.6 C0.5,3.2 2.8,0.9 6.2,0.3 C7.8,0 9.6,0.1 10.9,0.7 C12.4,0.1 14.4,0 16,0.5 C19,1.3 21,3.6 21.8,6.6 C22.1,7.4 22,8 21.4,8.2 C20.6,8.6 19.9,9.2 19.7,10 L19.7,15.4 L15.9,15.4 L15.9,11.6 L10.9,11.6 L10.9,15.4 L7.9,15.4 L7.9,12.2 C7.4,11.4 6.8,10.8 6.2,10.8 C5.6,11.2 5.5,12 5.7,13 L5.9,15.4 Z" fill="#a67dd6"/><path d="M10.9,0.9 C12,3 11.8,5.6 10.4,7.2 C9,8.6 7,8.4 5.8,7" fill="none" stroke="#4a2a72" stroke-width="0.7"/><path d="M1.8,6 L3.2,6 M1.8,8.6 L3,8.6" stroke="#4a2a72" stroke-width="0.6"/></g>
<path d="M732.40,86.20 L747.40,101.00 M747.40,86.20 L732.40,101.00" stroke="#ffffff" stroke-width="1.8" fill="none" />
<path d="M599.70,136.70 L608.30,145.50 L599.70,154.30" stroke="#a9a9a9" stroke-width="1.8" fill="none" />
<path d="M693.20,136.70 L701.80,145.50 L693.20,154.30" stroke="#a9a9a9" stroke-width="1.8" fill="none" />
<path d="M820.70,136.70 L829.30,145.50 L820.70,154.30" stroke="#a9a9a9" stroke-width="1.8" fill="none" />
<g transform="translate(845.20 138.00) scale(1.0000 1.0000)"><path d="M3.7,15.4 C3.4,14.4 3.6,13.6 3.2,12.6 C1.4,11.4 0.1,9.4 0.3,6.6 C0.5,3.2 2.8,0.9 6.2,0.3 C7.8,0 9.6,0.1 10.9,0.7 C12.4,0.1 14.4,0 16,0.5 C19,1.3 21,3.6 21.8,6.6 C22.1,7.4 22,8 21.4,8.2 C20.6,8.6 19.9,9.2 19.7,10 L19.7,15.4 L15.9,15.4 L15.9,11.6 L10.9,11.6 L10.9,15.4 L7.9,15.4 L7.9,12.2 C7.4,11.4 6.8,10.8 6.2,10.8 C5.6,11.2 5.5,12 5.7,13 L5.9,15.4 Z" fill="#a67dd6"/><path d="M10.9,0.9 C12,3 11.8,5.6 10.4,7.2 C9,8.6 7,8.4 5.8,7" fill="none" stroke="#4a2a72" stroke-width="0.7"/><path d="M1.8,6 L3.2,6 M1.8,8.6 L3,8.6" stroke="#4a2a72" stroke-width="0.6"/></g>
<path d="M2418.4,83.5 L2434.2,93.8 L2418.4,104.2 Z" stroke="#cccccc" stroke-width="1.8" fill="none" stroke-linejoin="round"/>
<rect x="2463.00" y="81.90" width="22.00" height="21.60" rx="2.2" stroke="#cccccc" stroke-width="1.8" fill="none"/>
<line x1="2463.00" y1="92.70" x2="2485.00" y2="92.70" stroke="#cccccc" stroke-width="1.8" stroke-linecap="butt"/>
<circle cx="2510.70" cy="93.30" r="2.00" fill="#cccccc"/><circle cx="2519.70" cy="93.30" r="2.00" fill="#cccccc"/><circle cx="2528.70" cy="93.30" r="2.00" fill="#cccccc"/>
<path d="M23.5,1343.6 L30.5,1350.6 L23.5,1357.6 M38,1338.4 L31.5,1344.9 L38,1351.4" stroke="#ffffff" stroke-width="1.7" fill="none" />
<circle cx="88.00" cy="1348.40" r="10.20" stroke="#cccccc" stroke-width="1.6" fill="none"/>
<path d="M83.60,1344.00 L92.40,1352.80 M92.40,1344.00 L83.60,1352.80" stroke="#cccccc" stroke-width="1.6" fill="none" />
<path d="M136.7,1338.6 L146.8,1358 L126.6,1358 Z" stroke="#cccccc" stroke-width="1.6" fill="none" stroke-linejoin="round"/>
<path d="M136.7,1345 L136.7,1352.2 M136.7,1354 L136.7,1356" stroke="#cccccc" stroke-width="1.8" fill="none" />
<circle cx="209.00" cy="1345.08" r="1.76" stroke="#cccccc" stroke-width="1.6" fill="none"/><path d="M203.72,1358.28 L209.00,1346.84 L214.28,1358.28 M205.48,1354.32 L212.52,1354.32" stroke="#cccccc" stroke-width="1.6" fill="none" /><path d="M206.22,1349.04 A4.84,4.84 0 0 1 206.22,1341.12" stroke="#cccccc" stroke-width="1.5" fill="none" /><path d="M211.78,1349.04 A4.84,4.84 0 0 0 211.78,1341.12" stroke="#cccccc" stroke-width="1.5" fill="none" /><path d="M204.20,1351.93 A8.36,8.36 0 0 1 204.20,1338.23" stroke="#cccccc" stroke-width="1.5" fill="none" /><path d="M213.80,1351.93 A8.36,8.36 0 0 0 213.80,1338.23" stroke="#cccccc" stroke-width="1.5" fill="none" />
<circle cx="2391.30" cy="1346.20" r="9.20" stroke="#cccccc" stroke-width="1.6" fill="none"/>
<circle cx="2391.30" cy="1346.20" r="4.60" stroke="#cccccc" stroke-width="1.6" fill="none"/>
<rect x="2389.6" y="1346" width="3.6" height="14" rx="1.5" fill="#cccccc" stroke="#181818" stroke-width="1"/>
<path d="M2513.4,1355 L2530,1355 L2527.8,1350.6 L2527.8,1344.6 C2527.8,1335.4 2515.6,1335.4 2515.6,1344.6 L2515.6,1350.6 Z" stroke="#cccccc" stroke-width="1.6" fill="none" stroke-linejoin="round"/>
<path d="M2519.6,1356.5 Q2521.7,1359.6 2523.8,1356.5" stroke="#cccccc" stroke-width="1.5" fill="none" />
</svg>
<div class="t" style="left:43px;top:1199px;width:29px;height:29px;line-height:29px;border-radius:15px;background:#0078d4;color:#fff;font-size:16px;font-weight:bold;text-align:center">1</div>
</div></body></html>
